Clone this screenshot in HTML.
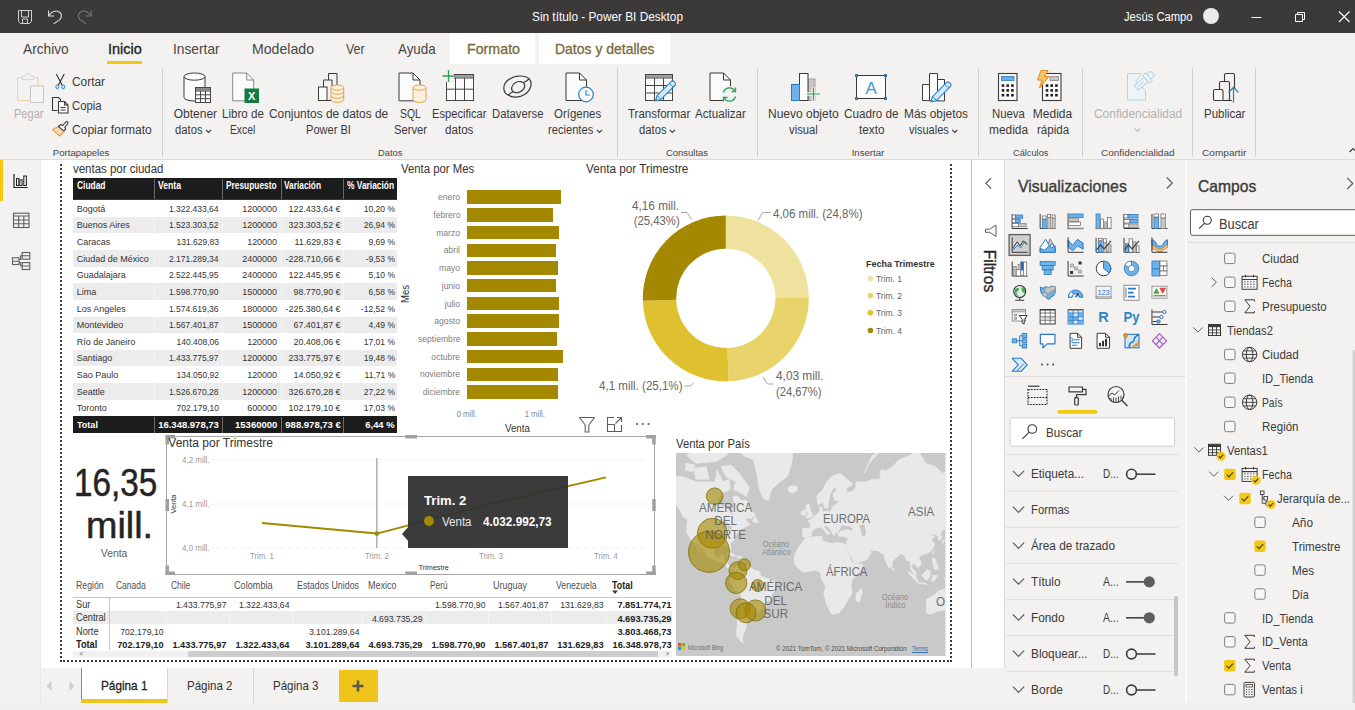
<!DOCTYPE html>
<html lang="es"><head><meta charset="utf-8"><title>Sin título - Power BI Desktop</title><style>
html,body{margin:0;padding:0;}
body{width:1355px;height:710px;overflow:hidden;background:#fff;font-family:"Liberation Sans",sans-serif;}
#app{position:relative;width:1355px;height:710px;overflow:hidden;}
.b{position:absolute;display:block;box-sizing:border-box;}
.t{position:absolute;white-space:nowrap;line-height:1;display:block;}
</style></head><body><div id="app">
<!-- frame -->
<div class="b" style="left:0px;top:0px;width:1355px;height:33px;background:#3b3a39;"></div>
<span class="t" style="top:9.90px;font-size:13px;color:#ffffff;left:532.00px;transform-origin:0 0;transform:scaleX(0.9086);">Sin título - Power BI Desktop</span>
<span class="t" style="top:10.10px;font-size:13px;color:#ffffff;left:1124.40px;transform-origin:0 0;transform:scaleX(0.8631);">Jesús Campo</span>
<div class="b" style="left:1203px;top:8px;width:16px;height:16px;background:#ebebeb;border-radius:50%;"></div>
<svg class="b" style="left:1246px;top:8px;" width="104" height="18" viewBox="0 0 104 18"><path d="M5.5 9.5h10" stroke="#fff" stroke-width="1" fill="none"/><path d="M49.5 6.5h7v7h-7zM51.5 6.5v-2h7v7h-2" stroke="#fff" stroke-width="1" fill="none"/><path d="M93 3.5l10.5 10.5M103.5 3.5L93 14" stroke="#fff" stroke-width="1.1" fill="none"/></svg>
<svg class="b" style="left:0px;top:0px;" width="120" height="33" viewBox="0 0 120 33"><path d="M18.500 10.500h13v11l-2 2h-9l-2-2z" stroke="#d0d0d0" stroke-width="1" fill="none"/><path d="M21.500 10.500v6.500h7v-6.500M22.500 23.500v-4.500h5v4.500" stroke="#d0d0d0" stroke-width="1" fill="none"/><path d="M48.600 10.600v5.400h5.600" stroke="#e0e0e0" stroke-width="1.100" fill="none"/><path d="M49 15.600c2.200-4 6.800-5.800 10.200-3.600 3 2 2.800 5.200.500 7.600l-6 4.300" stroke="#e0e0e0" stroke-width="1.100" fill="none"/><path d="M91.200 10.600v5.400h-5.600" stroke="#7a7876" stroke-width="1.100" fill="none"/><path d="M90.800 15.600c-2.200-4-6.800-5.800-10.200-3.600-3 2-2.800 5.200-.500 7.600l6 4.300" stroke="#7a7876" stroke-width="1.100" fill="none"/></svg>
<div class="b" style="left:0px;top:33px;width:1355px;height:127px;background:#f3f2f1;"></div>
<div class="b" style="left:0px;top:159px;width:1355px;height:1px;background:#dddbd9;"></div>
<div class="b" style="left:450px;top:33px;width:85px;height:30.5px;background:#ffffff;"></div>
<div class="b" style="left:539px;top:33px;width:131px;height:30.5px;background:#ffffff;"></div>
<span class="t" style="top:42.33px;font-size:14.5px;color:#484644;left:23.30px;transform-origin:0 0;transform:scaleX(0.9452);">Archivo</span>
<span class="t" style="top:42.33px;font-size:14.5px;color:#201f1e;-webkit-text-stroke:0.32px #201f1e;left:107.90px;transform-origin:0 0;">Inicio</span>
<div class="b" style="left:107px;top:61px;width:35px;height:2.7px;background:#f2c811;"></div>
<span class="t" style="top:42.33px;font-size:14.5px;color:#484644;left:173.00px;transform-origin:0 0;transform:scaleX(0.9480);">Insertar</span>
<span class="t" style="top:42.33px;font-size:14.5px;color:#484644;left:252.00px;transform-origin:0 0;transform:scaleX(0.9735);">Modelado</span>
<span class="t" style="top:42.33px;font-size:14.5px;color:#484644;left:346.30px;transform-origin:0 0;transform:scaleX(0.8591);">Ver</span>
<span class="t" style="top:42.33px;font-size:14.5px;color:#484644;left:397.70px;transform-origin:0 0;transform:scaleX(0.9228);">Ayuda</span>
<span class="t" style="top:42.33px;font-size:14.5px;color:#7a6c3a;-webkit-text-stroke:0.32px #7a6c3a;left:467.00px;transform-origin:0 0;transform:scaleX(0.9817);">Formato</span>
<span class="t" style="top:42.33px;font-size:14.5px;color:#7a6c3a;-webkit-text-stroke:0.32px #7a6c3a;left:554.60px;transform-origin:0 0;transform:scaleX(0.9635);">Datos y detalles</span>
<div class="b" style="left:162.0px;top:68px;width:1px;height:89px;background:#d2d0ce;"></div>
<div class="b" style="left:616.5px;top:68px;width:1px;height:89px;background:#d2d0ce;"></div>
<div class="b" style="left:757.0px;top:68px;width:1px;height:89px;background:#d2d0ce;"></div>
<div class="b" style="left:977.5px;top:68px;width:1px;height:89px;background:#d2d0ce;"></div>
<div class="b" style="left:1081.5px;top:68px;width:1px;height:89px;background:#d2d0ce;"></div>
<div class="b" style="left:1191.5px;top:68px;width:1px;height:89px;background:#d2d0ce;"></div>
<div class="b" style="left:1255.0px;top:68px;width:1px;height:89px;background:#d2d0ce;"></div>
<div class="b" style="left:0px;top:160px;width:41px;height:543px;background:#f3f2f1;"></div>
<div class="b" style="left:40px;top:160px;width:1px;height:543px;background:#eceae8;"></div>
<div class="b" style="left:0px;top:160px;width:3px;height:40.5px;background:#f2c811;"></div>
<svg class="b" style="left:0px;top:159px;" width="41" height="120" viewBox="0 0 41 120"><path d="M14 15v13.500h13.700" fill="none" stroke="#252423" stroke-width="1.200"/><rect x="16.500" y="19.500" width="2.300" height="7" fill="none" stroke="#252423" stroke-width="1"/><rect x="19.800" y="20.800" width="2.300" height="5.700" fill="none" stroke="#252423" stroke-width="1"/><rect x="23.800" y="17" width="2.600" height="9.500" fill="none" stroke="#252423" stroke-width="1"/><rect x="13.500" y="54.200" width="15.500" height="14.300" fill="none" stroke="#605e5c" stroke-width="1.100"/><path d="M13.500 57h15.500M13.500 61h15.500M13.500 64.800h15.500M18.700 57v11.500M23.800 57v11.500" stroke="#605e5c" stroke-width="1.100"/><g fill="none" stroke="#605e5c" stroke-width="1.100"><rect x="12.500" y="98.800" width="6.500" height="6.700"/><rect x="22.200" y="93.500" width="7.600" height="6.700"/><rect x="22.200" y="103.600" width="7.600" height="6.900"/><path d="M12.500 102.200h6.500M22.200 96.800h7.600M22.200 107h7.600M19 100.500h1.600v-3.700h1.600M19 103.500h1.600v3.500h1.600"/></g></svg>
<div class="b" style="left:41px;top:160px;width:931px;height:508px;background:#ffffff;"></div>
<div class="b" style="left:972.5px;top:160px;width:32px;height:508px;background:#ffffff;"></div>
<div class="b" style="left:1004.5px;top:160px;width:181px;height:543px;background:#f3f2f1;"></div>
<div class="b" style="left:1004px;top:160px;width:1px;height:543px;background:#dddbd9;"></div>
<div class="b" style="left:1185px;top:160px;width:2px;height:543px;background:#faf9f8;"></div>
<div class="b" style="left:1187px;top:160px;width:168px;height:543px;background:#f3f2f1;"></div>
<div class="b" style="left:41px;top:668px;width:963.5px;height:35px;background:#f3f2f1;"></div>
<div class="b" style="left:81px;top:668px;width:86px;height:35px;background:#ffffff;"></div>
<div class="b" style="left:80.5px;top:668px;width:1px;height:35px;background:#8a8886;"></div>
<div class="b" style="left:81px;top:699px;width:86px;height:3.8px;background:#efc51c;"></div>
<div class="b" style="left:167px;top:668px;width:86px;height:35px;background:#f3f2f1;"></div>
<div class="b" style="left:253px;top:668px;width:85.5px;height:35px;background:#f3f2f1;"></div>
<div class="b" style="left:166.5px;top:668px;width:1px;height:35px;background:#d8d6d4;"></div>
<div class="b" style="left:252.5px;top:668px;width:1px;height:35px;background:#d8d6d4;"></div>
<div class="b" style="left:338.5px;top:670.2px;width:39.2px;height:32px;background:#efc51c;"></div>
<span class="t" style="top:678.60px;font-size:13px;color:#201f1e;-webkit-text-stroke:0.29px #201f1e;left:101.00px;transform-origin:0 0;transform:scaleX(0.9060);">Página 1</span>
<span class="t" style="top:678.60px;font-size:13px;color:#323130;left:186.50px;transform-origin:0 0;transform:scaleX(0.8865);">Página 2</span>
<span class="t" style="top:678.60px;font-size:13px;color:#323130;left:272.50px;transform-origin:0 0;transform:scaleX(0.8865);">Página 3</span>
<svg class="b" style="left:350px;top:678px;" width="16" height="16" viewBox="0 0 16 16"><path d="M8 2.500v11M2.500 8h11" stroke="#5c574a" stroke-width="2.6" fill="none"/></svg>
<svg class="b" style="left:44px;top:680px;" width="32" height="12" viewBox="0 0 32 12"><path d="M7.500 1v10l-5-5z" fill="#d2d0ce"/><path d="M25.500 1v10l5-5z" fill="#d2d0ce"/></svg>
<div class="b" style="left:0px;top:703px;width:1355px;height:7px;background:#f0efee;"></div>
<!-- ribbon -->
<svg class="b" style="left:0px;top:0px;" width="1355" height="159" viewBox="0 0 1355 159"><path d="M23.500 77.500h-6v23h13M32.500 77.500h5.500v8" fill="none" stroke="#efd2ad" stroke-width="1"/><path d="M22.500 79.500v-3.500h3c0-3.500 5-3.500 5 0h3v3.500z" fill="#f3f2f1" stroke="#d9d7d5" stroke-width="1"/><rect x="30.500" y="86" width="13" height="16.500" fill="#f6f5f4" stroke="#c8c6c4" stroke-width="1"/><path d="M56.300 74l6 11.500M64.200 74l-6 11.500" stroke="#3b3a39" stroke-width="1.200" fill="none"/><ellipse cx="57.300" cy="86.800" rx="1.500" ry="2" fill="#cfe4f5" stroke="#2e86c9" stroke-width="1"/><ellipse cx="63.200" cy="86.800" rx="1.500" ry="2" fill="#cfe4f5" stroke="#2e86c9" stroke-width="1"/><path d="M57.500 110.500h-5v-13h6l2 2v1.500" fill="none" stroke="#3b3a39" stroke-width="1.100"/><path d="M58.500 101.500h6l3.500 3.500v8h-9.500zM64.500 101.500v3.500h3.500" fill="#fbfbfb" stroke="#3b3a39" stroke-width="1.100"/><path d="M60.500 107.500h5M60.500 110h5" stroke="#3b3a39" stroke-width="1"/><path d="M52.500 129.500l7-3.500 5 5.500-5 4.500c-2-2-4.500-4-7-6.500z" fill="#f7d9ae" stroke="#e3a04a" stroke-width="1.100" stroke-linejoin="round"/><path d="M58.500 126.500l2.500-2 1.800 1 3-3.500c1-1 2.800 0.300 2 1.500l-3 3.800 0.800 1.700-2 1.800z" fill="#fbfbfb" stroke="#3b3a39" stroke-width="1.100" stroke-linejoin="round"/><path d="M184 76.6v20.8a10.5 3.6 0 0 0 21 0v-20.8" fill="#fbfbfb" stroke="#3b3a39" stroke-width="1"/><ellipse cx="194.5" cy="76.6" rx="10.5" ry="3.6" fill="#fbfbfb" stroke="#3b3a39" stroke-width="1"/><rect x="195.5" y="87.5" width="15" height="15" fill="#fbfbfb" stroke="#484644" stroke-width="1"/><rect x="196.0" y="88.0" width="14" height="2.5" fill="#8a8886"/><path d="M200.5 91.0V102.5" stroke="#484644" stroke-width="1"/><path d="M205.5 91.0V102.5" stroke="#484644" stroke-width="1"/><path d="M195.5 91.0H210.5" stroke="#484644" stroke-width="1"/><path d="M195.5 94.8H210.5" stroke="#484644" stroke-width="1"/><path d="M195.5 98.7H210.5" stroke="#484644" stroke-width="1"/><path d="M232.7 73h14l7 7v20.8h-21z" fill="#fbfbfb" stroke="#8a8886" stroke-width="1"/><path d="M246.7 73v7h7" fill="none" stroke="#8a8886" stroke-width="1"/><rect x="244.500" y="88.500" width="14.500" height="14.500" fill="#107c41"/><text x="251.750" y="100" font-family="Liberation Sans, sans-serif" font-weight="700" font-size="11" fill="#fff" text-anchor="middle">X</text><path d="M328.500 80v-6.500h8.500v12" fill="none" stroke="#3b3a39" stroke-width="1"/><path d="M323.500 87v-7h8.500v6" fill="none" stroke="#3b3a39" stroke-width="1"/><rect x="318.500" y="87" width="8.500" height="13.500" fill="#fbfbfb" stroke="#3b3a39" stroke-width="1"/><path d="M327 100.500h4" stroke="#3b3a39" stroke-width="1"/><path d="M331 87.6v12.2a6.35 2.6 0 0 0 12.7 0v-12.2" fill="#fdf1de" stroke="#e3a04a" stroke-width="1"/><ellipse cx="337.35" cy="87.6" rx="6.35" ry="2.6" fill="#fdf1de" stroke="#e3a04a" stroke-width="1"/><path d="M331 91.66666666666666a6.35 2.6 0 0 0 12.7 0" fill="none" stroke="#e3a04a" stroke-width="1"/><path d="M331 95.73333333333332a6.35 2.6 0 0 0 12.7 0" fill="none" stroke="#e3a04a" stroke-width="1"/><path d="M399 73h14l7 7v20.8h-21z" fill="#fbfbfb" stroke="#3b3a39" stroke-width="1"/><path d="M413 73v7h7" fill="none" stroke="#3b3a39" stroke-width="1"/><path d="M413 87.6v12.2a6.5 2.6 0 0 0 13 0v-12.2" fill="#fdf1de" stroke="#e3a04a" stroke-width="1"/><ellipse cx="419.5" cy="87.6" rx="6.5" ry="2.6" fill="#fdf1de" stroke="#e3a04a" stroke-width="1"/><rect x="446.5" y="74.5" width="27" height="26" fill="#fbfbfb" stroke="#484644" stroke-width="1"/><rect x="447.0" y="75.0" width="26" height="2.5" fill="#a19f9d"/><path d="M455.5 78.0V100.5" stroke="#484644" stroke-width="1"/><path d="M464.5 78.0V100.5" stroke="#484644" stroke-width="1"/><path d="M446.5 78.0H473.5" stroke="#484644" stroke-width="1"/><path d="M446.5 89.2H473.5" stroke="#484644" stroke-width="1"/><rect x="441" y="69" width="13" height="13" fill="#f3f2f1"/><path d="M448.500 70v12M442.500 76h12" stroke="#2f9e57" stroke-width="1.300"/><g fill="none" stroke="#3b3a39" stroke-width="1.200"><path d="M508.500 95.200c-6-2.500-6.500-11 0-15.500 6.500-4.500 16.500-5 20.500-1 4.200 4.200 1.500 12-4 15.500-5.500 3.500-12.500 3.800-16.500 1z"/><path d="M513.300 91.800c-2.800-2-2-6.800 2-9 3.800-2.200 8.200-1.500 9.200 1.500 1 3-1.500 6.500-5 7.800-2.300.800-4.600.800-6.200-.300z"/><path d="M508.500 95.200c1-1.500 2.800-2.800 4.800-3.400M529 78.700c-1 1.500-3 3-5 3.800"/></g><path d="M566 73h13.5l7 7v20.5h-20.5z" fill="#fbfbfb" stroke="#3b3a39" stroke-width="1"/><path d="M579.5 73v7h7" fill="none" stroke="#3b3a39" stroke-width="1"/><circle cx="586" cy="94.500" r="7.300" fill="#fbfbfb" stroke="#2e86c9" stroke-width="1.200"/><path d="M586 90v5h4" fill="none" stroke="#2e86c9" stroke-width="1.200"/><rect x="645.5" y="74.5" width="27" height="26" fill="#fbfbfb" stroke="#484644" stroke-width="1"/><rect x="646.0" y="75.0" width="26" height="2.5" fill="#a19f9d"/><path d="M654.5 78.0V100.5" stroke="#484644" stroke-width="1"/><path d="M663.5 78.0V100.5" stroke="#484644" stroke-width="1"/><path d="M645.5 78.0H672.5" stroke="#484644" stroke-width="1"/><path d="M645.5 85.5H672.5" stroke="#484644" stroke-width="1"/><path d="M645.5 93.0H672.5" stroke="#484644" stroke-width="1"/><path d="M655.50 101.00L660.98 99.41L675.38 85.01L675.38 82.88L673.62 81.12L671.49 81.12L657.09 95.52z" fill="#d6e9f8" stroke="#2e86c9" stroke-width="1.1" stroke-linejoin="round"/><path d="M660.98 99.41L657.09 95.52" stroke="#2e86c9" stroke-width="1"/><path d="M673.26 87.13L669.37 83.24" stroke="#2e86c9" stroke-width="1"/><path d="M655.50 101.00L657.76 100.15L656.35 98.74z" fill="#2e86c9"/><path d="M710 73h13.5l7 7v20.5h-20.5z" fill="#fbfbfb" stroke="#3b3a39" stroke-width="1"/><path d="M723.5 73v7h7" fill="none" stroke="#3b3a39" stroke-width="1"/><circle cx="729.500" cy="94.500" r="8.500" fill="#f3f2f1"/><path d="M723.500 92.500a6.300 6.300 0 0 1 11.500-1.500M735.500 96.500a6.300 6.300 0 0 1-11.500 1.500" fill="none" stroke="#2f9e57" stroke-width="1.300"/><path d="M735.500 87.500v4h-4M723.500 101.500v-4h4" fill="none" stroke="#2f9e57" stroke-width="1.300"/><rect x="808" y="79" width="7" height="21.500" fill="#c8c6c4" stroke="#a19f9d" stroke-width="1"/><rect x="799.500" y="73.500" width="8.500" height="27" fill="#fbfbfb" stroke="#3b3a39" stroke-width="1"/><rect x="791.500" y="84.500" width="8" height="16" fill="#6db3ea" stroke="#2b78c2" stroke-width="1"/><path d="M813.500 87v14M806.500 94h14" stroke="#f3f2f1" stroke-width="3.500"/><path d="M813.500 87.500v13M807 94h13" stroke="#2f9e57" stroke-width="1.200"/><rect x="856.500" y="75.500" width="29" height="23" fill="#fbfbfb" stroke="#3b3a39" stroke-width="1"/><rect x="855.0" y="74.0" width="3" height="3" fill="#3a78a8"/><rect x="884.0" y="74.0" width="3" height="3" fill="#3a78a8"/><rect x="855.0" y="97.0" width="3" height="3" fill="#3a78a8"/><rect x="884.0" y="97.0" width="3" height="3" fill="#3a78a8"/><text x="871.250" y="93.500" font-family="Liberation Sans, sans-serif" font-size="17" fill="#3f97d6" text-anchor="middle">A</text><path d="M922.500 100.500v-16h7v-11h8v6h7v21.500z" fill="#fbfbfb" stroke="#3b3a39" stroke-width="1"/><path d="M929.500 84.500v16M937.500 79.500v21" stroke="#3b3a39" stroke-width="1"/><path d="M931.00 102.00L936.48 100.41L950.88 86.01L950.88 83.88L949.12 82.12L946.99 82.12L932.59 96.52z" fill="#d6e9f8" stroke="#2e86c9" stroke-width="1.1" stroke-linejoin="round"/><path d="M936.48 100.41L932.59 96.52" stroke="#2e86c9" stroke-width="1"/><path d="M948.76 88.13L944.87 84.24" stroke="#2e86c9" stroke-width="1"/><path d="M931.00 102.00L933.26 101.15L931.85 99.74z" fill="#2e86c9"/><rect x="998.5" y="73.500" width="18.500" height="27" fill="#fbfbfb" stroke="#3b3a39" stroke-width="1.100"/><rect x="1001.7" y="84.3" width="2.600" height="2.600" fill="#201f1e"/><rect x="1006.4" y="84.3" width="2.600" height="2.600" fill="#201f1e"/><rect x="1011.1" y="84.3" width="2.600" height="2.600" fill="#201f1e"/><rect x="1001.7" y="89.1" width="2.600" height="2.600" fill="#201f1e"/><rect x="1006.4" y="89.1" width="2.600" height="2.600" fill="#201f1e"/><rect x="1011.1" y="89.1" width="2.600" height="2.600" fill="#201f1e"/><rect x="1001.7" y="93.9" width="2.600" height="2.600" fill="#201f1e"/><rect x="1006.4" y="93.9" width="2.600" height="2.600" fill="#201f1e"/><rect x="1011.1" y="93.9" width="2.600" height="2.600" fill="#201f1e"/><rect x="1001.500" y="76.500" width="12.500" height="4" fill="#69afe5" stroke="#2b78c2" stroke-width="0.800"/><rect x="1042.5" y="73.500" width="18.500" height="27" fill="#fbfbfb" stroke="#3b3a39" stroke-width="1.100"/><rect x="1045.7" y="84.3" width="2.600" height="2.600" fill="#201f1e"/><rect x="1050.4" y="84.3" width="2.600" height="2.600" fill="#201f1e"/><rect x="1055.1" y="84.3" width="2.600" height="2.600" fill="#201f1e"/><rect x="1045.7" y="89.1" width="2.600" height="2.600" fill="#201f1e"/><rect x="1050.4" y="89.1" width="2.600" height="2.600" fill="#201f1e"/><rect x="1055.1" y="89.1" width="2.600" height="2.600" fill="#201f1e"/><rect x="1045.7" y="93.9" width="2.600" height="2.600" fill="#201f1e"/><rect x="1050.4" y="93.9" width="2.600" height="2.600" fill="#201f1e"/><rect x="1055.1" y="93.9" width="2.600" height="2.600" fill="#201f1e"/><rect x="1050" y="76.500" width="8.500" height="4" fill="#c8c6c4" stroke="#8a8886" stroke-width="0.800"/><path d="M1041 70.500h7l-3.500 6h4.500l-9.500 11.500 2.500-8h-4.500z" fill="#fbc36a" stroke="#e08a1e" stroke-width="1" stroke-linejoin="round"/><path d="M1127.500 73.500h14l-6 8 10 9v9.500h-18z" fill="#f0f4f7" stroke="#b6d3e6" stroke-width="1"/><g transform="translate(1143,82) rotate(-42)"><rect x="-9" y="-3" width="13" height="6" fill="#f0f4f7" stroke="#b6d3e6" stroke-width="1"/><rect x="4" y="-5" width="4" height="10" fill="#f0f4f7" stroke="#b6d3e6" stroke-width="1"/><rect x="8" y="-3" width="5" height="6" rx="1.500" fill="#f0f4f7" stroke="#b6d3e6" stroke-width="1"/><path d="M-7 0h8" stroke="#b6d3e6" stroke-width="1"/></g><path d="M1224.500 81v-6c0-1 .800-1.500 1.500-1.500h7c1 0 1.500.800 1.500 1.500v14" fill="none" stroke="#3b3a39" stroke-width="1.100"/><path d="M1219.500 89.500v-6.500c0-1 .800-1.500 1.500-1.500h7c1 0 1.500.800 1.500 1.500v17.500" fill="none" stroke="#3b3a39" stroke-width="1.100"/><rect x="1213.500" y="89.500" width="9.500" height="11" rx="1.500" fill="#fbfbfb" stroke="#3b3a39" stroke-width="1.100"/><path d="M1223 100.500h9.500" stroke="#3b3a39" stroke-width="1.100"/><path d="M1233.500 102v-14" stroke="#f3f2f1" stroke-width="3.500"/><path d="M1233.500 102.500v-15M1228.500 92.500l5-5.200 5 5.200" fill="none" stroke="#2f7d95" stroke-width="1.200"/><path d="M205.9 129.89999999999998l2.600 2.600 2.600-2.600" stroke="#3b3a39" stroke-width="1.100" fill="none"/><path d="M596.9 129.89999999999998l2.600 2.600 2.600-2.600" stroke="#3b3a39" stroke-width="1.100" fill="none"/><path d="M669.6999999999999 129.89999999999998l2.600 2.600 2.600-2.600" stroke="#3b3a39" stroke-width="1.100" fill="none"/><path d="M952.1999999999999 129.89999999999998l2.600 2.600 2.600-2.600" stroke="#3b3a39" stroke-width="1.100" fill="none"/><path d="M1134.9 128.7l2.600 2.600 2.600-2.600" stroke="#b3b0ad" stroke-width="1.100" fill="none"/><path d="M1349.500 152l3.500-3.500 3.500 3.500" stroke="#3b3a39" stroke-width="1.200" fill="none"/></svg>
<span class="t" style="top:108.04px;font-size:12px;color:#b3b0ad;left:13.50px;transform-origin:0 0;transform:scaleX(0.9212);">Pegar</span>
<span class="t" style="top:75.74px;font-size:12px;color:#3b3a39;left:72.40px;transform-origin:0 0;transform:scaleX(0.9898);">Cortar</span>
<span class="t" style="top:100.04px;font-size:12px;color:#3b3a39;left:72.40px;transform-origin:0 0;transform:scaleX(0.9440);">Copia</span>
<span class="t" style="top:123.84px;font-size:12px;color:#3b3a39;left:72.40px;transform-origin:0 0;transform:scaleX(1.0042);">Copiar formato</span>
<span class="t" style="top:147.57px;font-size:9.6px;color:#484644;left:52.80px;transform-origin:0 0;">Portapapeles</span>
<span class="t" style="top:108.04px;font-size:12px;color:#3b3a39;left:173.70px;transform-origin:0 0;">Obtener</span>
<span class="t" style="top:123.84px;font-size:12px;color:#3b3a39;left:175.00px;transform-origin:0 0;transform:scaleX(0.9368);">datos</span>
<span class="t" style="top:108.04px;font-size:12px;color:#3b3a39;left:221.60px;transform-origin:0 0;transform:scaleX(0.9662);">Libro de</span>
<span class="t" style="top:123.84px;font-size:12px;color:#3b3a39;left:230.00px;transform-origin:0 0;transform:scaleX(0.8588);">Excel</span>
<span class="t" style="top:108.04px;font-size:12px;color:#3b3a39;left:268.50px;transform-origin:0 0;transform:scaleX(0.9926);">Conjuntos de datos de</span>
<span class="t" style="top:123.84px;font-size:12px;color:#3b3a39;left:305.60px;transform-origin:0 0;transform:scaleX(0.9222);">Power BI</span>
<span class="t" style="top:108.04px;font-size:12px;color:#3b3a39;left:399.50px;transform-origin:0 0;transform:scaleX(0.8662);">SQL</span>
<span class="t" style="top:123.84px;font-size:12px;color:#3b3a39;left:393.50px;transform-origin:0 0;transform:scaleX(0.9365);">Server</span>
<span class="t" style="top:108.04px;font-size:12px;color:#3b3a39;left:432.30px;transform-origin:0 0;transform:scaleX(0.9286);">Especificar</span>
<span class="t" style="top:123.84px;font-size:12px;color:#3b3a39;left:445.40px;transform-origin:0 0;transform:scaleX(0.9674);">datos</span>
<span class="t" style="top:108.04px;font-size:12px;color:#3b3a39;left:553.80px;transform-origin:0 0;transform:scaleX(0.9562);">Orígenes</span>
<span class="t" style="top:123.84px;font-size:12px;color:#3b3a39;left:548.30px;transform-origin:0 0;transform:scaleX(0.9283);">recientes</span>
<span class="t" style="top:108.04px;font-size:12px;color:#3b3a39;left:628.00px;transform-origin:0 0;transform:scaleX(0.9599);">Transformar</span>
<span class="t" style="top:123.84px;font-size:12px;color:#3b3a39;left:639.00px;transform-origin:0 0;transform:scaleX(0.9368);">datos</span>
<span class="t" style="top:108.04px;font-size:12px;color:#3b3a39;left:768.00px;transform-origin:0 0;">Nuevo objeto</span>
<span class="t" style="top:123.84px;font-size:12px;color:#3b3a39;left:789.00px;transform-origin:0 0;transform:scaleX(0.9387);">visual</span>
<span class="t" style="top:108.04px;font-size:12px;color:#3b3a39;left:844.00px;transform-origin:0 0;transform:scaleX(0.9743);">Cuadro de</span>
<span class="t" style="top:123.84px;font-size:12px;color:#3b3a39;left:858.50px;transform-origin:0 0;transform:scaleX(0.9802);">texto</span>
<span class="t" style="top:108.04px;font-size:12px;color:#3b3a39;left:903.60px;transform-origin:0 0;transform:scaleX(0.9892);">Más objetos</span>
<span class="t" style="top:123.84px;font-size:12px;color:#3b3a39;left:909.00px;transform-origin:0 0;transform:scaleX(0.9180);">visuales</span>
<span class="t" style="top:108.04px;font-size:12px;color:#3b3a39;left:992.00px;transform-origin:0 0;transform:scaleX(0.9456);">Nueva</span>
<span class="t" style="top:123.84px;font-size:12px;color:#3b3a39;left:989.00px;transform-origin:0 0;transform:scaleX(0.9909);">medida</span>
<span class="t" style="top:108.04px;font-size:12px;color:#3b3a39;left:1032.80px;transform-origin:0 0;">Medida</span>
<span class="t" style="top:123.84px;font-size:12px;color:#3b3a39;left:1036.50px;transform-origin:0 0;transform:scaleX(0.9623);">rápida</span>
<span class="t" style="top:108.04px;font-size:12px;color:#3b3a39;left:491.80px;transform-origin:0 0;transform:scaleX(0.9416);">Dataverse</span>
<span class="t" style="top:108.04px;font-size:12px;color:#3b3a39;left:695.40px;transform-origin:0 0;transform:scaleX(0.9660);">Actualizar</span>
<span class="t" style="top:108.04px;font-size:12px;color:#b3b0ad;left:1093.80px;transform-origin:0 0;transform:scaleX(0.9940);">Confidencialidad</span>
<span class="t" style="top:108.04px;font-size:12px;color:#3b3a39;left:1204.00px;transform-origin:0 0;transform:scaleX(0.9549);">Publicar</span>
<span class="t" style="top:147.57px;font-size:9.6px;color:#484644;left:377.60px;transform-origin:0 0;transform:scaleX(0.9729);">Datos</span>
<span class="t" style="top:147.57px;font-size:9.6px;color:#484644;left:666.00px;transform-origin:0 0;transform:scaleX(0.9838);">Consultas</span>
<span class="t" style="top:147.57px;font-size:9.6px;color:#484644;left:851.70px;transform-origin:0 0;">Insertar</span>
<span class="t" style="top:147.57px;font-size:9.6px;color:#484644;left:1012.60px;transform-origin:0 0;transform:scaleX(0.9615);">Cálculos</span>
<span class="t" style="top:147.57px;font-size:9.6px;color:#484644;left:1100.80px;transform-origin:0 0;transform:scaleX(1.0354);">Confidencialidad</span>
<span class="t" style="top:147.57px;font-size:9.6px;color:#484644;left:1202.00px;transform-origin:0 0;transform:scaleX(1.0512);">Compartir</span>
<!-- canvas -->
<div class="b" style="left:41px;top:160px;width:930.500px;height:508px;overflow:hidden;background:#fff;"><div class="b" style="left:-41px;top:-160px;width:1355px;height:710px;">
<div class="b" style="left:60px;top:164px;width:892px;height:498px;border:2px dotted #3a3a3a;border-top:none;"></div>
<span class="t" style="top:162.74px;font-size:12px;color:#333;left:73.00px;transform-origin:0 0;transform:scaleX(0.9553);">ventas por ciudad</span>
<div class="b" style="left:73px;top:178px;width:323.8px;height:21.5px;background:#1c1c1c;"></div>
<div class="b" style="left:73px;top:199px;width:323.8px;height:0.5px;background:#2a3a55;"></div>
<div class="b" style="left:154.1px;top:178.5px;width:1px;height:20.2px;background:#6a6a6a;"></div>
<div class="b" style="left:221.5px;top:178.5px;width:1px;height:20.2px;background:#6a6a6a;"></div>
<div class="b" style="left:280.5px;top:178.5px;width:1px;height:20.2px;background:#6a6a6a;"></div>
<div class="b" style="left:343.3px;top:178.5px;width:1px;height:20.2px;background:#6a6a6a;"></div>
<span class="t" style="top:181.33px;font-size:10px;color:#ffffff;font-weight:700;left:76.70px;transform-origin:0 0;transform:scaleX(0.8410);">Ciudad</span>
<span class="t" style="top:181.33px;font-size:10px;color:#ffffff;font-weight:700;left:157.80px;transform-origin:0 0;transform:scaleX(0.8583);">Venta</span>
<span class="t" style="top:181.33px;font-size:10px;color:#ffffff;font-weight:700;left:225.70px;transform-origin:0 0;transform:scaleX(0.8353);">Presupuesto</span>
<span class="t" style="top:181.33px;font-size:10px;color:#ffffff;font-weight:700;left:284.30px;transform-origin:0 0;transform:scaleX(0.8320);">Variación</span>
<span class="t" style="top:181.33px;font-size:10px;color:#ffffff;font-weight:700;left:347.40px;transform-origin:0 0;transform:scaleX(0.8372);">% Variación</span>
<span class="t" style="top:204.78px;font-size:9px;color:#333333;left:76.70px;transform-origin:0 0;">Bogotá</span>
<span class="t" style="top:204.78px;font-size:9px;color:#333333;right:1136.40px;transform-origin:100% 0;transform:scaleX(0.9450);">1.322.433,64</span>
<span class="t" style="top:204.78px;font-size:9px;color:#333333;right:1077.70px;transform-origin:100% 0;transform:scaleX(0.9950);">1200000</span>
<span class="t" style="top:204.78px;font-size:9px;color:#333333;right:1014.20px;transform-origin:100% 0;transform:scaleX(0.9900);">122.433,64 €</span>
<span class="t" style="top:204.78px;font-size:9px;color:#333333;right:960.00px;transform-origin:100% 0;transform:scaleX(0.9500);">10,20 %</span>
<div class="b" style="left:73px;top:216.8px;width:323.8px;height:16.6px;background:#ececec;"></div>
<div class="b" style="left:154.1px;top:216.8px;width:1px;height:16.6px;background:#f6f6f6;"></div>
<div class="b" style="left:221.5px;top:216.8px;width:1px;height:16.6px;background:#f6f6f6;"></div>
<div class="b" style="left:280.5px;top:216.8px;width:1px;height:16.6px;background:#f6f6f6;"></div>
<div class="b" style="left:343.3px;top:216.8px;width:1px;height:16.6px;background:#f6f6f6;"></div>
<span class="t" style="top:221.41px;font-size:9px;color:#333333;left:76.70px;transform-origin:0 0;">Buenos Aires</span>
<span class="t" style="top:221.41px;font-size:9px;color:#333333;right:1136.40px;transform-origin:100% 0;transform:scaleX(0.9450);">1.523.303,52</span>
<span class="t" style="top:221.41px;font-size:9px;color:#333333;right:1077.70px;transform-origin:100% 0;transform:scaleX(0.9950);">1200000</span>
<span class="t" style="top:221.41px;font-size:9px;color:#333333;right:1014.20px;transform-origin:100% 0;transform:scaleX(0.9900);">323.303,52 €</span>
<span class="t" style="top:221.41px;font-size:9px;color:#333333;right:960.00px;transform-origin:100% 0;transform:scaleX(0.9500);">26,94 %</span>
<span class="t" style="top:238.04px;font-size:9px;color:#333333;left:76.70px;transform-origin:0 0;">Caracas</span>
<span class="t" style="top:238.04px;font-size:9px;color:#333333;right:1136.40px;transform-origin:100% 0;transform:scaleX(0.9450);">131.629,83</span>
<span class="t" style="top:238.04px;font-size:9px;color:#333333;right:1077.70px;transform-origin:100% 0;transform:scaleX(0.9950);">120000</span>
<span class="t" style="top:238.04px;font-size:9px;color:#333333;right:1014.20px;transform-origin:100% 0;transform:scaleX(0.9900);">11.629,83 €</span>
<span class="t" style="top:238.04px;font-size:9px;color:#333333;right:960.00px;transform-origin:100% 0;transform:scaleX(0.9500);">9,69 %</span>
<div class="b" style="left:73px;top:250.1px;width:323.8px;height:16.6px;background:#ececec;"></div>
<div class="b" style="left:154.1px;top:250.1px;width:1px;height:16.6px;background:#f6f6f6;"></div>
<div class="b" style="left:221.5px;top:250.1px;width:1px;height:16.6px;background:#f6f6f6;"></div>
<div class="b" style="left:280.5px;top:250.1px;width:1px;height:16.6px;background:#f6f6f6;"></div>
<div class="b" style="left:343.3px;top:250.1px;width:1px;height:16.6px;background:#f6f6f6;"></div>
<span class="t" style="top:254.67px;font-size:9px;color:#333333;left:76.70px;transform-origin:0 0;">Ciudad de México</span>
<span class="t" style="top:254.67px;font-size:9px;color:#333333;right:1136.40px;transform-origin:100% 0;transform:scaleX(0.9450);">2.171.289,34</span>
<span class="t" style="top:254.67px;font-size:9px;color:#333333;right:1077.70px;transform-origin:100% 0;transform:scaleX(0.9950);">2400000</span>
<span class="t" style="top:254.67px;font-size:9px;color:#333333;right:1014.20px;transform-origin:100% 0;transform:scaleX(0.9900);">-228.710,66 €</span>
<span class="t" style="top:254.67px;font-size:9px;color:#333333;right:960.00px;transform-origin:100% 0;transform:scaleX(0.9500);">-9,53 %</span>
<span class="t" style="top:271.30px;font-size:9px;color:#333333;left:76.70px;transform-origin:0 0;">Guadalajara</span>
<span class="t" style="top:271.30px;font-size:9px;color:#333333;right:1136.40px;transform-origin:100% 0;transform:scaleX(0.9450);">2.522.445,95</span>
<span class="t" style="top:271.30px;font-size:9px;color:#333333;right:1077.70px;transform-origin:100% 0;transform:scaleX(0.9950);">2400000</span>
<span class="t" style="top:271.30px;font-size:9px;color:#333333;right:1014.20px;transform-origin:100% 0;transform:scaleX(0.9900);">122.445,95 €</span>
<span class="t" style="top:271.30px;font-size:9px;color:#333333;right:960.00px;transform-origin:100% 0;transform:scaleX(0.9500);">5,10 %</span>
<div class="b" style="left:73px;top:283.3px;width:323.8px;height:16.6px;background:#ececec;"></div>
<div class="b" style="left:154.1px;top:283.3px;width:1px;height:16.6px;background:#f6f6f6;"></div>
<div class="b" style="left:221.5px;top:283.3px;width:1px;height:16.6px;background:#f6f6f6;"></div>
<div class="b" style="left:280.5px;top:283.3px;width:1px;height:16.6px;background:#f6f6f6;"></div>
<div class="b" style="left:343.3px;top:283.3px;width:1px;height:16.6px;background:#f6f6f6;"></div>
<span class="t" style="top:287.93px;font-size:9px;color:#333333;left:76.70px;transform-origin:0 0;">Lima</span>
<span class="t" style="top:287.93px;font-size:9px;color:#333333;right:1136.40px;transform-origin:100% 0;transform:scaleX(0.9450);">1.598.770,90</span>
<span class="t" style="top:287.93px;font-size:9px;color:#333333;right:1077.70px;transform-origin:100% 0;transform:scaleX(0.9950);">1500000</span>
<span class="t" style="top:287.93px;font-size:9px;color:#333333;right:1014.20px;transform-origin:100% 0;transform:scaleX(0.9900);">98.770,90 €</span>
<span class="t" style="top:287.93px;font-size:9px;color:#333333;right:960.00px;transform-origin:100% 0;transform:scaleX(0.9500);">6,58 %</span>
<span class="t" style="top:304.56px;font-size:9px;color:#333333;left:76.70px;transform-origin:0 0;">Los Angeles</span>
<span class="t" style="top:304.56px;font-size:9px;color:#333333;right:1136.40px;transform-origin:100% 0;transform:scaleX(0.9450);">1.574.619,36</span>
<span class="t" style="top:304.56px;font-size:9px;color:#333333;right:1077.70px;transform-origin:100% 0;transform:scaleX(0.9950);">1800000</span>
<span class="t" style="top:304.56px;font-size:9px;color:#333333;right:1014.20px;transform-origin:100% 0;transform:scaleX(0.9900);">-225.380,64 €</span>
<span class="t" style="top:304.56px;font-size:9px;color:#333333;right:960.00px;transform-origin:100% 0;transform:scaleX(0.9500);">-12,52 %</span>
<div class="b" style="left:73px;top:316.6px;width:323.8px;height:16.6px;background:#ececec;"></div>
<div class="b" style="left:154.1px;top:316.6px;width:1px;height:16.6px;background:#f6f6f6;"></div>
<div class="b" style="left:221.5px;top:316.6px;width:1px;height:16.6px;background:#f6f6f6;"></div>
<div class="b" style="left:280.5px;top:316.6px;width:1px;height:16.6px;background:#f6f6f6;"></div>
<div class="b" style="left:343.3px;top:316.6px;width:1px;height:16.6px;background:#f6f6f6;"></div>
<span class="t" style="top:321.19px;font-size:9px;color:#333333;left:76.70px;transform-origin:0 0;">Montevideo</span>
<span class="t" style="top:321.19px;font-size:9px;color:#333333;right:1136.40px;transform-origin:100% 0;transform:scaleX(0.9450);">1.567.401,87</span>
<span class="t" style="top:321.19px;font-size:9px;color:#333333;right:1077.70px;transform-origin:100% 0;transform:scaleX(0.9950);">1500000</span>
<span class="t" style="top:321.19px;font-size:9px;color:#333333;right:1014.20px;transform-origin:100% 0;transform:scaleX(0.9900);">67.401,87 €</span>
<span class="t" style="top:321.19px;font-size:9px;color:#333333;right:960.00px;transform-origin:100% 0;transform:scaleX(0.9500);">4,49 %</span>
<span class="t" style="top:337.82px;font-size:9px;color:#333333;left:76.70px;transform-origin:0 0;">Río de Janeiro</span>
<span class="t" style="top:337.82px;font-size:9px;color:#333333;right:1136.40px;transform-origin:100% 0;transform:scaleX(0.9450);">140.408,06</span>
<span class="t" style="top:337.82px;font-size:9px;color:#333333;right:1077.70px;transform-origin:100% 0;transform:scaleX(0.9950);">120000</span>
<span class="t" style="top:337.82px;font-size:9px;color:#333333;right:1014.20px;transform-origin:100% 0;transform:scaleX(0.9900);">20.408,06 €</span>
<span class="t" style="top:337.82px;font-size:9px;color:#333333;right:960.00px;transform-origin:100% 0;transform:scaleX(0.9500);">17,01 %</span>
<div class="b" style="left:73px;top:349.9px;width:323.8px;height:16.6px;background:#ececec;"></div>
<div class="b" style="left:154.1px;top:349.9px;width:1px;height:16.6px;background:#f6f6f6;"></div>
<div class="b" style="left:221.5px;top:349.9px;width:1px;height:16.6px;background:#f6f6f6;"></div>
<div class="b" style="left:280.5px;top:349.9px;width:1px;height:16.6px;background:#f6f6f6;"></div>
<div class="b" style="left:343.3px;top:349.9px;width:1px;height:16.6px;background:#f6f6f6;"></div>
<span class="t" style="top:354.45px;font-size:9px;color:#333333;left:76.70px;transform-origin:0 0;">Santiago</span>
<span class="t" style="top:354.45px;font-size:9px;color:#333333;right:1136.40px;transform-origin:100% 0;transform:scaleX(0.9450);">1.433.775,97</span>
<span class="t" style="top:354.45px;font-size:9px;color:#333333;right:1077.70px;transform-origin:100% 0;transform:scaleX(0.9950);">1200000</span>
<span class="t" style="top:354.45px;font-size:9px;color:#333333;right:1014.20px;transform-origin:100% 0;transform:scaleX(0.9900);">233.775,97 €</span>
<span class="t" style="top:354.45px;font-size:9px;color:#333333;right:960.00px;transform-origin:100% 0;transform:scaleX(0.9500);">19,48 %</span>
<span class="t" style="top:371.08px;font-size:9px;color:#333333;left:76.70px;transform-origin:0 0;">Sao Paulo</span>
<span class="t" style="top:371.08px;font-size:9px;color:#333333;right:1136.40px;transform-origin:100% 0;transform:scaleX(0.9450);">134.050,92</span>
<span class="t" style="top:371.08px;font-size:9px;color:#333333;right:1077.70px;transform-origin:100% 0;transform:scaleX(0.9950);">120000</span>
<span class="t" style="top:371.08px;font-size:9px;color:#333333;right:1014.20px;transform-origin:100% 0;transform:scaleX(0.9900);">14.050,92 €</span>
<span class="t" style="top:371.08px;font-size:9px;color:#333333;right:960.00px;transform-origin:100% 0;transform:scaleX(0.9500);">11,71 %</span>
<div class="b" style="left:73px;top:383.1px;width:323.8px;height:16.6px;background:#ececec;"></div>
<div class="b" style="left:154.1px;top:383.1px;width:1px;height:16.6px;background:#f6f6f6;"></div>
<div class="b" style="left:221.5px;top:383.1px;width:1px;height:16.6px;background:#f6f6f6;"></div>
<div class="b" style="left:280.5px;top:383.1px;width:1px;height:16.6px;background:#f6f6f6;"></div>
<div class="b" style="left:343.3px;top:383.1px;width:1px;height:16.6px;background:#f6f6f6;"></div>
<span class="t" style="top:387.71px;font-size:9px;color:#333333;left:76.70px;transform-origin:0 0;">Seattle</span>
<span class="t" style="top:387.71px;font-size:9px;color:#333333;right:1136.40px;transform-origin:100% 0;transform:scaleX(0.9450);">1.526.670,28</span>
<span class="t" style="top:387.71px;font-size:9px;color:#333333;right:1077.70px;transform-origin:100% 0;transform:scaleX(0.9950);">1200000</span>
<span class="t" style="top:387.71px;font-size:9px;color:#333333;right:1014.20px;transform-origin:100% 0;transform:scaleX(0.9900);">326.670,28 €</span>
<span class="t" style="top:387.71px;font-size:9px;color:#333333;right:960.00px;transform-origin:100% 0;transform:scaleX(0.9500);">27,22 %</span>
<span class="t" style="top:404.34px;font-size:9px;color:#333333;left:76.70px;transform-origin:0 0;">Toronto</span>
<span class="t" style="top:404.34px;font-size:9px;color:#333333;right:1136.40px;transform-origin:100% 0;transform:scaleX(0.9450);">702.179,10</span>
<span class="t" style="top:404.34px;font-size:9px;color:#333333;right:1077.70px;transform-origin:100% 0;transform:scaleX(0.9950);">600000</span>
<span class="t" style="top:404.34px;font-size:9px;color:#333333;right:1014.20px;transform-origin:100% 0;transform:scaleX(0.9900);">102.179,10 €</span>
<span class="t" style="top:404.34px;font-size:9px;color:#333333;right:960.00px;transform-origin:100% 0;transform:scaleX(0.9500);">17,03 %</span>
<div class="b" style="left:73px;top:415.6px;width:323.8px;height:1px;background:#9fd0ee;"></div>
<div class="b" style="left:73px;top:416.3px;width:323.8px;height:16.4px;background:#1c1c1c;"></div>
<div class="b" style="left:154.1px;top:416.5px;width:1px;height:16px;background:#6a6a6a;"></div>
<div class="b" style="left:221.5px;top:416.5px;width:1px;height:16px;background:#6a6a6a;"></div>
<div class="b" style="left:280.5px;top:416.5px;width:1px;height:16px;background:#6a6a6a;"></div>
<div class="b" style="left:343.3px;top:416.5px;width:1px;height:16px;background:#6a6a6a;"></div>
<span class="t" style="top:420.26px;font-size:9.5px;color:#fff;font-weight:700;left:76.70px;transform-origin:0 0;transform:scaleX(0.9500);">Total</span>
<span class="t" style="top:420.26px;font-size:9.5px;color:#fff;font-weight:700;right:1136.10px;transform-origin:100% 0;">16.348.978,73</span>
<span class="t" style="top:420.26px;font-size:9.5px;color:#fff;font-weight:700;right:1077.70px;transform-origin:100% 0;">15360000</span>
<span class="t" style="top:420.26px;font-size:9.5px;color:#fff;font-weight:700;right:1014.20px;transform-origin:100% 0;">988.978,73 €</span>
<span class="t" style="top:420.26px;font-size:9.5px;color:#fff;font-weight:700;right:960.00px;transform-origin:100% 0;transform:scaleX(0.9900);">6,44 %</span>
<span class="t" style="top:162.74px;font-size:12px;color:#333;left:401.20px;transform-origin:0 0;transform:scaleX(0.9447);">Venta por Mes</span>
<div class="b" style="left:466.7px;top:190.4px;width:94.0px;height:13.5px;background:#a38800;"></div>
<span class="t" style="top:193.28px;font-size:9px;color:#808080;right:894.70px;transform-origin:100% 0;transform:scaleX(0.9550);">enero</span>
<div class="b" style="left:466.7px;top:208.1px;width:85.9px;height:13.5px;background:#a38800;"></div>
<span class="t" style="top:210.99px;font-size:9px;color:#808080;right:894.70px;transform-origin:100% 0;transform:scaleX(0.9550);">febrero</span>
<div class="b" style="left:466.7px;top:225.8px;width:92.3px;height:13.5px;background:#a38800;"></div>
<span class="t" style="top:228.70px;font-size:9px;color:#808080;right:894.70px;transform-origin:100% 0;transform:scaleX(0.9550);">marzo</span>
<div class="b" style="left:466.7px;top:243.5px;width:89.2px;height:13.5px;background:#a38800;"></div>
<span class="t" style="top:246.41px;font-size:9px;color:#808080;right:894.70px;transform-origin:100% 0;transform:scaleX(0.9550);">abril</span>
<div class="b" style="left:466.7px;top:261.2px;width:91.2px;height:13.5px;background:#a38800;"></div>
<span class="t" style="top:264.12px;font-size:9px;color:#808080;right:894.70px;transform-origin:100% 0;transform:scaleX(0.9550);">mayo</span>
<div class="b" style="left:466.7px;top:278.9px;width:89.2px;height:13.5px;background:#a38800;"></div>
<span class="t" style="top:281.83px;font-size:9px;color:#808080;right:894.70px;transform-origin:100% 0;transform:scaleX(0.9550);">junio</span>
<div class="b" style="left:466.7px;top:296.7px;width:92.8px;height:13.5px;background:#a38800;"></div>
<span class="t" style="top:299.54px;font-size:9px;color:#808080;right:894.70px;transform-origin:100% 0;transform:scaleX(0.9550);">julio</span>
<div class="b" style="left:466.7px;top:314.4px;width:92.3px;height:13.5px;background:#a38800;"></div>
<span class="t" style="top:317.25px;font-size:9px;color:#808080;right:894.70px;transform-origin:100% 0;transform:scaleX(0.9550);">agosto</span>
<div class="b" style="left:466.7px;top:332.1px;width:90.0px;height:13.5px;background:#a38800;"></div>
<span class="t" style="top:334.95px;font-size:9px;color:#808080;right:894.70px;transform-origin:100% 0;transform:scaleX(0.9550);">septiembre</span>
<div class="b" style="left:466.7px;top:349.8px;width:96.3px;height:13.5px;background:#a38800;"></div>
<span class="t" style="top:352.66px;font-size:9px;color:#808080;right:894.70px;transform-origin:100% 0;transform:scaleX(0.9550);">octubre</span>
<div class="b" style="left:466.7px;top:367.5px;width:91.2px;height:13.5px;background:#a38800;"></div>
<span class="t" style="top:370.37px;font-size:9px;color:#808080;right:894.70px;transform-origin:100% 0;transform:scaleX(0.9550);">noviembre</span>
<div class="b" style="left:466.7px;top:385.2px;width:91.2px;height:13.5px;background:#a38800;"></div>
<span class="t" style="top:388.08px;font-size:9px;color:#808080;right:894.70px;transform-origin:100% 0;transform:scaleX(0.9550);">diciembre</span>
<span class="t" style="top:410.18px;font-size:9px;color:#888;left:454.55px;transform-origin:50% 0;transform:scaleX(0.8600);">0 mill.</span>
<span class="t" style="top:410.18px;font-size:9px;color:#888;left:522.85px;transform-origin:50% 0;transform:scaleX(0.8600);">1 mill.</span>
<span class="t" style="top:423.01px;font-size:10.5px;color:#333;left:503.87px;transform-origin:50% 0;transform:scaleX(0.9300);">Venta</span>
<span class="t" style="left:406px;top:294.4px;font-size:10px;color:#333;transform:translate(-50%,-50%) rotate(-90deg) scaleX(0.95);">Mes</span>
<svg class="b" style="left:576px;top:414px;" width="80" height="22" viewBox="0 0 80 22"><path d="M3.500 3.500h15l-5.700 7.500v7h-3.600v-7z" fill="none" stroke="#605e5c" stroke-width="1.100" stroke-linejoin="round"/><path d="M38 3.500h-6.500v14h14v-6.500M31.500 10.500h7v7M41 3.500h4.500v4.500M45.500 3.500l-6 6" fill="none" stroke="#605e5c" stroke-width="1.100"/><circle cx="61" cy="10" r="1.100" fill="#605e5c"/><circle cx="66.800" cy="10" r="1.100" fill="#605e5c"/><circle cx="72.600" cy="10" r="1.100" fill="#605e5c"/></svg>
<span class="t" style="top:162.74px;font-size:12px;color:#333;left:586.00px;transform-origin:0 0;transform:scaleX(0.9779);">Venta por Trimestre</span>
<svg class="b" style="left:600px;top:180px;" width="360" height="240" viewBox="0 0 360 240"><path d="M125.80 35.40A83 83 0 0 1 208.79 117.36L175.40 117.78A49.6 49.6 0 0 0 125.80 68.80z" fill="#efe29e"/><path d="M208.79 117.36A83 83 0 0 1 128.56 201.35L127.45 167.97A49.6 49.6 0 0 0 175.40 117.78z" fill="#e9d46c"/><path d="M128.56 201.35A83 83 0 0 1 42.83 120.64L76.22 119.74A49.6 49.6 0 0 0 127.45 167.97z" fill="#dfc12f"/><path d="M42.83 120.64A83 83 0 0 1 125.80 35.40L125.80 68.80A49.6 49.6 0 0 0 76.22 119.74z" fill="#a38800"/><path d="M170.5 32.5h-8l-4.500 8" fill="none" stroke="#a6a6a6" stroke-width="1"/><path d="M81 32.5h6l4.500 7" fill="none" stroke="#a6a6a6" stroke-width="1"/><path d="M173.5 204h-6l-4.500-7" fill="none" stroke="#a6a6a6" stroke-width="1"/><path d="M84.5 206h6l3-3" fill="none" stroke="#a6a6a6" stroke-width="1"/><circle cx="270.4" cy="98.69999999999999" r="2.800" fill="#efe29e"/><circle cx="270.4" cy="115.60000000000002" r="2.800" fill="#e9d46c"/><circle cx="270.4" cy="132.8" r="2.800" fill="#dfc12f"/><circle cx="270.4" cy="150.5" r="2.800" fill="#a38800"/></svg>
<span class="t" style="top:207.62px;font-size:12.5px;color:#666;left:772.80px;transform-origin:0 0;transform:scaleX(0.9202);">4,06 mill. (24,8%)</span>
<span class="t" style="top:199.52px;font-size:12.5px;color:#666;right:675.70px;transform-origin:100% 0;transform:scaleX(0.9396);">4,16 mill.</span>
<span class="t" style="top:215.02px;font-size:12.5px;color:#666;right:675.70px;transform-origin:100% 0;transform:scaleX(0.9069);">(25,43%)</span>
<span class="t" style="top:370.22px;font-size:12.5px;color:#666;left:775.60px;transform-origin:0 0;transform:scaleX(0.9476);">4,03 mill.</span>
<span class="t" style="top:386.22px;font-size:12.5px;color:#666;left:775.60px;transform-origin:0 0;transform:scaleX(0.8971);">(24,67%)</span>
<span class="t" style="top:380.42px;font-size:12.5px;color:#666;left:598.90px;transform-origin:0 0;transform:scaleX(0.9246);">4,1 mill. (25,1%)</span>
<span class="t" style="top:259.16px;font-size:9.5px;color:#333;font-weight:700;left:866.30px;transform-origin:0 0;transform:scaleX(0.9428);">Fecha Trimestre</span>
<span class="t" style="top:274.88px;font-size:9px;color:#666;left:876.00px;transform-origin:0 0;transform:scaleX(0.9398);">Trim. 1</span>
<span class="t" style="top:291.78px;font-size:9px;color:#666;left:876.00px;transform-origin:0 0;transform:scaleX(0.9398);">Trim. 2</span>
<span class="t" style="top:308.98px;font-size:9px;color:#666;left:876.00px;transform-origin:0 0;transform:scaleX(0.9398);">Trim. 3</span>
<span class="t" style="top:326.68px;font-size:9px;color:#666;left:876.00px;transform-origin:0 0;transform:scaleX(0.9398);">Trim. 4</span>
<span class="t" style="top:464.03px;font-size:38px;color:#252423;left:73.60px;transform-origin:0 0;transform:scaleX(0.8749);-webkit-text-stroke:0.5px #252423;">16,35</span>
<span class="t" style="top:507.90px;font-size:36.5px;color:#252423;left:86.00px;transform-origin:0 0;transform:scaleX(1.0327);-webkit-text-stroke:0.5px #252423;">mill.</span>
<span class="t" style="top:547.99px;font-size:11px;color:#605e5c;left:100.13px;transform-origin:50% 0;transform:scaleX(0.9453);">Venta</span>
<span class="t" style="top:580.93px;font-size:10px;color:#505050;left:76.30px;transform-origin:0 0;transform:scaleX(0.8709);">Región</span>
<span class="t" style="top:580.93px;font-size:10px;color:#505050;left:115.70px;transform-origin:0 0;transform:scaleX(0.8450);">Canada</span>
<span class="t" style="top:580.93px;font-size:10px;color:#505050;left:171.20px;transform-origin:0 0;transform:scaleX(0.8469);">Chile</span>
<span class="t" style="top:580.93px;font-size:10px;color:#505050;left:233.90px;transform-origin:0 0;transform:scaleX(0.9138);">Colombia</span>
<span class="t" style="top:580.93px;font-size:10px;color:#505050;left:297.10px;transform-origin:0 0;transform:scaleX(0.8852);">Estados Unidos</span>
<span class="t" style="top:580.93px;font-size:10px;color:#505050;left:367.50px;transform-origin:0 0;transform:scaleX(0.8966);">Mexico</span>
<span class="t" style="top:580.93px;font-size:10px;color:#505050;left:429.50px;transform-origin:0 0;transform:scaleX(0.8284);">Perú</span>
<span class="t" style="top:580.93px;font-size:10px;color:#505050;left:492.50px;transform-origin:0 0;transform:scaleX(0.8968);">Uruguay</span>
<span class="t" style="top:580.93px;font-size:10px;color:#505050;left:555.70px;transform-origin:0 0;transform:scaleX(0.8713);">Venezuela</span>
<span class="t" style="top:580.93px;font-size:10px;color:#222;font-weight:700;left:611.70px;transform-origin:0 0;transform:scaleX(0.8900);">Total</span>
<svg class="b" style="left:611px;top:590px;" width="8" height="5" viewBox="0 0 8 5"><path d="M1 0.500h6l-3 3.500z" fill="#333"/></svg>
<div class="b" style="left:72.5px;top:596.6px;width:599.5px;height:1px;background:#a6cfea;"></div>
<div class="b" style="left:72.5px;top:611.4px;width:599.5px;height:12.8px;background:#ececec;"></div>
<div class="b" style="left:166px;top:611.4px;width:1px;height:12.8px;background:#f6f6f6;"></div>
<div class="b" style="left:229px;top:611.4px;width:1px;height:12.8px;background:#f6f6f6;"></div>
<div class="b" style="left:292px;top:611.4px;width:1px;height:12.8px;background:#f6f6f6;"></div>
<div class="b" style="left:362px;top:611.4px;width:1px;height:12.8px;background:#f6f6f6;"></div>
<div class="b" style="left:425px;top:611.4px;width:1px;height:12.8px;background:#f6f6f6;"></div>
<div class="b" style="left:488px;top:611.4px;width:1px;height:12.8px;background:#f6f6f6;"></div>
<div class="b" style="left:551px;top:611.4px;width:1px;height:12.8px;background:#f6f6f6;"></div>
<div class="b" style="left:606px;top:611.4px;width:1px;height:12.8px;background:#f6f6f6;"></div>
<div class="b" style="left:109px;top:597px;width:1px;height:53px;background:#a6cfea;"></div>
<span class="t" style="top:599.74px;font-size:10px;color:#333;left:76.30px;transform-origin:0 0;transform:scaleX(0.9200);">Sur</span>
<span class="t" style="top:600.16px;font-size:9.5px;color:#333;right:1128.60px;transform-origin:100% 0;transform:scaleX(0.9120);">1.433.775,97</span>
<span class="t" style="top:600.16px;font-size:9.5px;color:#333;right:1065.40px;transform-origin:100% 0;transform:scaleX(0.9120);">1.322.433,64</span>
<span class="t" style="top:600.16px;font-size:9.5px;color:#333;right:870.00px;transform-origin:100% 0;transform:scaleX(0.9120);">1.598.770,90</span>
<span class="t" style="top:600.16px;font-size:9.5px;color:#333;right:806.80px;transform-origin:100% 0;transform:scaleX(0.9120);">1.567.401,87</span>
<span class="t" style="top:600.16px;font-size:9.5px;color:#333;right:751.60px;transform-origin:100% 0;transform:scaleX(0.9120);">131.629,83</span>
<span class="t" style="top:600.16px;font-size:9.5px;color:#222;font-weight:700;right:683.10px;transform-origin:100% 0;transform:scaleX(0.9750);">7.851.774,71</span>
<span class="t" style="top:613.13px;font-size:10px;color:#333;left:76.30px;transform-origin:0 0;transform:scaleX(0.9200);">Central</span>
<span class="t" style="top:613.56px;font-size:9.5px;color:#333;right:932.80px;transform-origin:100% 0;transform:scaleX(0.9120);">4.693.735,29</span>
<span class="t" style="top:613.56px;font-size:9.5px;color:#222;font-weight:700;right:683.10px;transform-origin:100% 0;transform:scaleX(0.9750);">4.693.735,29</span>
<span class="t" style="top:626.84px;font-size:10px;color:#333;left:76.30px;transform-origin:0 0;transform:scaleX(0.9200);">Norte</span>
<span class="t" style="top:627.26px;font-size:9.5px;color:#333;right:1191.60px;transform-origin:100% 0;transform:scaleX(0.9120);">702.179,10</span>
<span class="t" style="top:627.26px;font-size:9.5px;color:#333;right:995.10px;transform-origin:100% 0;transform:scaleX(0.9120);">3.101.289,64</span>
<span class="t" style="top:627.26px;font-size:9.5px;color:#222;font-weight:700;right:683.10px;transform-origin:100% 0;transform:scaleX(0.9750);">3.803.468,73</span>
<span class="t" style="top:639.93px;font-size:10px;color:#222;font-weight:700;left:76.30px;transform-origin:0 0;transform:scaleX(0.9200);">Total</span>
<span class="t" style="top:640.36px;font-size:9.5px;color:#222;font-weight:700;right:1191.60px;transform-origin:100% 0;transform:scaleX(0.9750);">702.179,10</span>
<span class="t" style="top:640.36px;font-size:9.5px;color:#222;font-weight:700;right:1128.60px;transform-origin:100% 0;transform:scaleX(0.9750);">1.433.775,97</span>
<span class="t" style="top:640.36px;font-size:9.5px;color:#222;font-weight:700;right:1065.40px;transform-origin:100% 0;transform:scaleX(0.9750);">1.322.433,64</span>
<span class="t" style="top:640.36px;font-size:9.5px;color:#222;font-weight:700;right:995.10px;transform-origin:100% 0;transform:scaleX(0.9750);">3.101.289,64</span>
<span class="t" style="top:640.36px;font-size:9.5px;color:#222;font-weight:700;right:932.80px;transform-origin:100% 0;transform:scaleX(0.9750);">4.693.735,29</span>
<span class="t" style="top:640.36px;font-size:9.5px;color:#222;font-weight:700;right:870.00px;transform-origin:100% 0;transform:scaleX(0.9750);">1.598.770,90</span>
<span class="t" style="top:640.36px;font-size:9.5px;color:#222;font-weight:700;right:806.80px;transform-origin:100% 0;transform:scaleX(0.9750);">1.567.401,87</span>
<span class="t" style="top:640.36px;font-size:9.5px;color:#222;font-weight:700;right:751.60px;transform-origin:100% 0;transform:scaleX(0.9750);">131.629,83</span>
<span class="t" style="top:640.36px;font-size:9.5px;color:#222;font-weight:700;right:683.10px;transform-origin:100% 0;transform:scaleX(0.9750);">16.348.978,73</span>
<div class="b" style="left:72.5px;top:650.8px;width:599.5px;height:5.8px;background:#f1f1f1;"></div>
<div class="b" style="left:187.5px;top:650.8px;width:470px;height:5.8px;background:#cdcdcd;"></div>
<span class="t" style="top:650.33px;font-size:8px;color:#555;left:78.96px;transform-origin:50% 0;transform:scaleX(0.8000);">&lt;</span>
<span class="t" style="top:650.33px;font-size:8px;color:#555;left:665.06px;transform-origin:50% 0;transform:scaleX(0.8000);">&gt;</span>
<div class="b" style="left:166px;top:436px;width:489px;height:138.500px;border:1px solid #a6a6a6;"></div>
<svg class="b" style="left:160px;top:430px;" width="500" height="150" viewBox="0 0 500 150"><rect x="5.5" y="5.0" width="9.5" height="3.5" fill="#a0a0a0"/><rect x="5.5" y="5.0" width="3.5" height="9.5" fill="#a0a0a0"/><rect x="486.2" y="5.0" width="9.5" height="3.5" fill="#a0a0a0"/><rect x="492.2" y="5.0" width="3.5" height="9.5" fill="#a0a0a0"/><rect x="5.5" y="141.5" width="9.5" height="3.5" fill="#a0a0a0"/><rect x="5.5" y="135.5" width="3.5" height="9.5" fill="#a0a0a0"/><rect x="486.2" y="141.5" width="9.5" height="3.5" fill="#a0a0a0"/><rect x="492.2" y="135.5" width="3.5" height="9.5" fill="#a0a0a0"/><rect x="245.2" y="5.0" width="11.8" height="3.5" fill="#a0a0a0"/><rect x="245.2" y="141.5" width="11.8" height="3.5" fill="#a0a0a0"/><rect x="5.5" y="69.0" width="3.5" height="12" fill="#a0a0a0"/><rect x="492.2" y="69.0" width="3.5" height="12" fill="#a0a0a0"/><path d="M52 29.6H485" stroke="#e2e2e2" stroke-width="1" stroke-dasharray="1.500 2.500"/><path d="M52 74.0H485" stroke="#e2e2e2" stroke-width="1" stroke-dasharray="1.500 2.500"/><path d="M52 117.8H485" stroke="#e2e2e2" stroke-width="1" stroke-dasharray="1.500 2.500"/><path d="M216.8 28V118" stroke="#b0b0b0" stroke-width="1.500"/><path d="M102.0 93.0L216.8 103.6L331.3 73.8L446.0 47.4" fill="none" stroke="#a38800" stroke-width="2" stroke-linejoin="round"/><circle cx="216.8" cy="103.6" r="2.400" fill="#a38800"/></svg>
<span class="t" style="top:437.04px;font-size:12px;color:#333;left:168.30px;transform-origin:0 0;">Venta por Trimestre</span>
<span class="t" style="top:455.78px;font-size:9px;color:#999;left:181.50px;transform-origin:0 0;transform:scaleX(0.8869);">4,2 mill.</span>
<span class="t" style="top:500.18px;font-size:9px;color:#999;left:181.50px;transform-origin:0 0;transform:scaleX(0.8869);">4,1 mill.</span>
<span class="t" style="top:543.98px;font-size:9px;color:#999;left:181.50px;transform-origin:0 0;transform:scaleX(0.8869);">4,0 mill.</span>
<span class="t" style="top:552.28px;font-size:9px;color:#999;left:248.17px;transform-origin:50% 0;transform:scaleX(0.8600);">Trim. 1</span>
<span class="t" style="top:552.28px;font-size:9px;color:#999;left:362.97px;transform-origin:50% 0;transform:scaleX(0.8600);">Trim. 2</span>
<span class="t" style="top:552.28px;font-size:9px;color:#999;left:477.47px;transform-origin:50% 0;transform:scaleX(0.8600);">Trim. 3</span>
<span class="t" style="top:552.28px;font-size:9px;color:#999;left:592.17px;transform-origin:50% 0;transform:scaleX(0.8600);">Trim. 4</span>
<span class="t" style="top:564.13px;font-size:8px;color:#333;left:417.26px;transform-origin:50% 0;transform:scaleX(0.9000);">Trimestre</span>
<span class="t" style="left:173.800px;top:503.500px;font-size:8px;color:#333;transform:translate(-50%,-50%) rotate(-90deg) scaleX(0.92);">Venta</span>
<div class="b" style="left:408.3px;top:475.8px;width:159.4px;height:71.8px;background:rgba(48,48,48,0.95);"></div>
<svg class="b" style="left:401px;top:525.5px;" width="8" height="16" viewBox="0 0 8 16"><path d="M8 0v16l-7-8z" fill="#3c3c3c"/></svg>
<span class="t" style="top:494.82px;font-size:12.5px;color:#fff;font-weight:700;left:424.00px;transform-origin:0 0;transform:scaleX(1.0498);">Trim. 2</span>
<div class="b" style="left:423.8px;top:516px;width:10px;height:10px;background:#a38800;border-radius:50%;"></div>
<span class="t" style="top:515.74px;font-size:12px;color:#e6e6e6;left:441.50px;transform-origin:0 0;transform:scaleX(0.9610);">Venta</span>
<span class="t" style="top:515.74px;font-size:12px;color:#fff;font-weight:700;left:483.00px;transform-origin:0 0;transform:scaleX(0.9791);">4.032.992,73</span>
<svg class="b" style="left:676px;top:453px;overflow:hidden;" width="269.5" height="203" viewBox="0 0 269.5 203"><rect x="0" y="0" width="269.5" height="203" fill="#c9c9c9"/><path d="M-33.5 34.2L-27.4 23.4L-21.4 20.4L-6.3 23.4L6.8 23.4L19.9 29.0L27.0 29.0L39.0 29.0L41.1 17.2L47.1 29.0L53.1 26.2L54.1 36.6L48.1 38.9L42.1 45.5L41.1 51.4L46.1 53.3L53.1 56.9L55.2 63.6L56.2 58.6L58.2 53.3L57.2 43.4L62.2 43.4L65.2 47.5L70.3 47.5L73.3 53.3L79.3 62.0L75.3 65.2L69.3 65.2L70.3 68.3L74.3 71.2L69.3 74.1L65.2 75.4L64.2 78.2L61.2 79.5L59.2 83.3L59.2 85.8L54.1 90.6L55.2 95.2L54.1 97.5L52.1 93.0L49.1 91.8L45.1 93.0L41.1 93.0L38.0 95.2L37.0 100.8L39.0 104.0L44.1 105.1L45.1 101.9L48.1 101.9L47.1 107.2L51.1 108.2L52.1 112.4L55.2 114.4L58.2 115.4L55.2 116.4L51.1 114.4L48.1 110.3L43.1 109.3L39.0 107.2L30.0 102.9L29.0 99.7L24.9 95.2L21.9 90.6L19.9 90.6L24.9 99.7L22.9 97.5L19.9 93.0L17.9 88.3L14.9 87.1L12.9 83.3L10.8 79.5L10.8 71.2L11.9 66.7L6.8 63.6L3.8 56.9L-0.2 51.4L-5.3 47.5L-12.3 45.5L-17.4 49.5L-23.4 53.3L-29.4 58.6L-25.4 51.4L-30.4 45.5L-31.4 38.9zM62.2 -6.5L75.3 -30.0L105.5 -42.0L123.6 -30.0L117.6 -6.5L115.6 10.3L111.5 23.4L103.5 29.0L95.4 36.6L92.4 47.5L87.4 45.5L83.4 36.6L81.3 23.4L77.3 6.5L67.2 2.5zM55.2 12.1L63.2 20.4L73.3 34.2L70.3 43.4L63.2 38.9L57.2 36.6L60.2 29.0L50.1 23.4L45.1 13.8zM17.9 15.5L30.0 13.8L33.0 26.2L19.9 26.2zM10.8 2.5L24.9 -6.5L40.0 -17.1L55.2 -37.7L73.3 -33.7L59.2 -6.5L50.1 2.5L40.0 8.4L19.9 10.3zM9.8 10.3L18.9 12.1L16.9 18.8L9.8 17.2zM58.2 115.4L63.2 111.3L67.2 112.4L73.3 113.4L78.3 117.4L83.4 118.5L85.4 123.5L91.4 125.5L97.4 127.5L100.5 130.6L98.5 135.7L96.4 140.9L94.4 146.2L87.4 150.6L86.4 154.0L82.3 159.9L78.3 161.2L77.3 164.9L73.3 166.2L70.3 168.8L70.3 174.4L67.2 181.8L66.2 185.0L67.2 190.1L63.2 186.7L60.2 181.8L61.2 172.9L62.2 163.7L64.2 155.2L65.2 147.3L65.2 141.9L59.2 137.7L56.2 131.6L54.1 128.5L55.2 125.5L55.2 122.5L57.2 120.5zM126.7 83.3L126.7 75.4L133.7 75.4L134.7 71.2L131.7 68.3L136.7 65.2L139.7 62.0L143.8 58.6L143.8 53.3L146.8 55.1L145.8 58.6L149.8 58.6L154.8 58.6L156.9 53.3L159.9 51.4L163.9 47.5L158.9 47.5L156.9 41.2L160.9 36.6L157.9 34.2L153.8 41.2L152.8 47.5L151.8 55.1L148.8 55.1L146.8 49.5L141.8 51.4L140.7 43.4L146.8 36.6L150.8 29.0L155.9 23.4L163.9 20.4L167.9 23.4L177.0 31.6L171.0 34.2L170.0 38.9L176.0 38.9L180.0 34.2L180.0 29.0L190.1 29.0L196.1 26.2L204.2 26.2L204.2 17.2L209.2 17.2L211.2 29.0L210.2 17.2L216.3 13.8L223.3 6.5L234.4 2.5L241.4 -4.1L249.5 10.3L259.6 13.8L266.6 20.4L276.7 13.8L286.8 20.4L296.8 23.4L306.9 23.4L317.0 26.2L317.0 36.6L315.0 43.4L306.9 47.5L299.9 51.4L298.8 56.9L293.8 63.6L292.8 53.3L296.8 45.5L291.8 49.5L279.7 49.5L271.7 56.9L276.7 60.3L276.7 68.3L271.7 75.4L266.6 76.8L264.6 80.8L265.6 85.8L262.6 87.1L262.6 83.3L257.6 80.8L254.5 82.1L258.6 83.3L255.5 87.1L258.6 90.6L257.6 94.1L254.5 98.6L249.5 100.8L245.5 101.9L242.5 104.0L245.5 110.3L243.5 113.4L241.4 114.4L239.4 111.3L236.4 110.3L235.4 114.4L239.4 118.5L240.4 122.5L237.4 120.5L234.4 115.4L234.4 108.2L230.4 107.2L228.4 101.9L224.3 100.8L222.3 102.9L216.3 108.2L216.3 112.4L213.3 115.4L209.2 107.2L208.2 101.9L204.2 99.7L202.2 97.5L196.1 97.5L193.1 95.2L192.1 96.4L187.1 98.6L184.0 93.0L186.1 91.8L192.1 95.2L195.1 99.7L191.1 106.1L181.0 110.3L179.0 110.3L176.0 105.1L171.0 94.1L168.9 93.0L171.0 88.3L172.0 84.6L166.9 83.3L162.9 83.3L161.9 80.8L164.9 78.2L171.0 76.8L177.0 78.2L177.0 75.4L173.0 72.6L168.9 72.6L165.9 71.2L163.9 75.4L161.9 79.5L158.9 79.5L158.9 82.1L156.9 82.1L154.8 76.8L149.8 72.6L147.8 74.1L151.8 78.2L153.8 79.5L151.8 82.1L147.8 76.8L144.8 74.1L138.7 75.4L135.7 79.5L135.7 82.1L130.7 84.6zM129.7 84.6L145.8 83.3L146.8 88.3L155.9 90.6L160.9 89.5L167.9 90.6L170.0 94.1L173.0 100.8L175.0 108.2L179.0 111.3L187.1 111.3L183.0 119.5L176.0 126.5L175.0 133.6L176.0 139.8L171.0 148.4L167.9 154.0L162.9 159.9L155.9 161.2L153.8 157.5L150.8 151.8L147.8 140.9L149.8 133.6L144.8 124.5L144.8 119.5L139.7 117.4L131.7 118.5L127.7 119.5L122.6 115.4L118.6 111.3L118.6 101.9L122.6 94.1L125.6 90.6zM185.1 135.7L186.1 139.8L183.0 149.5L180.0 147.3L180.0 140.9zM130.7 65.2L136.7 63.6L135.7 60.3L133.7 55.1L132.7 50.5L129.7 53.3L130.7 58.6L132.7 60.3L130.7 62.0zM125.6 62.0L129.7 62.0L129.7 56.9L127.7 56.9L125.6 58.6zM111.5 36.6L113.6 32.9L120.6 32.9L121.6 36.6L117.6 40.1L113.6 38.9zM250.5 146.2L250.5 159.9L254.5 161.2L260.6 158.7L265.6 157.5L269.6 157.5L272.7 161.2L276.7 164.9L283.7 164.9L286.8 162.4L289.8 152.9L282.7 143.0L278.7 134.6L277.7 140.9L272.7 135.7L269.6 135.7L266.6 136.7L262.6 137.7L258.6 141.9zM231.4 118.5L234.4 119.5L239.4 123.5L242.5 129.6L240.4 128.5zM245.5 122.5L250.5 127.5L253.5 124.5L254.5 118.5L251.5 116.4zM241.4 129.6L244.5 129.6L250.5 130.6L250.5 131.6zM255.5 128.5L256.6 122.5L261.6 122.5L258.6 127.5zM256.6 105.1L258.6 105.1L260.6 110.3L262.6 116.4L258.6 116.4L256.6 109.3zM266.6 90.6L267.6 87.1L272.7 85.8L276.7 84.6L277.7 79.5L276.7 78.2L273.7 83.3L269.6 85.8L266.6 88.3zM216.3 114.4L218.3 116.4L216.3 117.4zM257.6 97.5L257.6 100.8L256.6 99.7zM267.6 124.5L270.7 126.5L274.7 125.5L277.7 126.5L277.7 132.6L274.7 131.6L269.6 127.5zM50.1 100.8L55.2 99.7L60.2 102.9L57.2 102.9zM61.2 102.9L66.2 104.0L64.2 105.1L61.2 105.1zM76.3 68.3L79.3 63.6L82.3 69.7L79.3 69.7zM188.1 20.4L193.1 10.3L204.2 -1.8L196.1 2.5L191.1 13.8zM147.8 -6.5L155.9 -20.0L163.9 -17.1L157.9 -1.8L150.8 -1.8zM278.7 71.2L279.7 58.6L278.7 58.6L278.7 65.2z" fill="#e9e9e9" stroke="#e9e9e9" stroke-width="0.800" stroke-linejoin="round"/><path d="M183.0 72.6L188.1 71.2L190.1 78.2L189.1 83.3L186.1 83.3L185.1 78.2zM43.1 69.7L47.1 68.3L51.1 69.7L53.1 72.6L56.2 74.1L55.2 76.8L52.1 76.8L51.1 72.6L48.1 76.8L47.1 74.1L48.1 71.2z" fill="#c9c9c9"/><circle cx="38.7" cy="43.2" r="8.3" fill="#a38800" fill-opacity="0.62" stroke="#7d6900" stroke-opacity="0.750" stroke-width="1"/><circle cx="36.4" cy="80.3" r="15" fill="#a38800" fill-opacity="0.62" stroke="#7d6900" stroke-opacity="0.750" stroke-width="1"/><circle cx="33.0" cy="98.9" r="20.5" fill="#a38800" fill-opacity="0.62" stroke="#7d6900" stroke-opacity="0.750" stroke-width="1"/><circle cx="61.9" cy="117.7" r="9" fill="#a38800" fill-opacity="0.62" stroke="#7d6900" stroke-opacity="0.750" stroke-width="1"/><circle cx="68.5" cy="111.8" r="6" fill="#a38800" fill-opacity="0.62" stroke="#7d6900" stroke-opacity="0.750" stroke-width="1"/><circle cx="60.2" cy="130.0" r="10.6" fill="#a38800" fill-opacity="0.62" stroke="#7d6900" stroke-opacity="0.750" stroke-width="1"/><circle cx="81.7" cy="132.6" r="6" fill="#a38800" fill-opacity="0.62" stroke="#7d6900" stroke-opacity="0.750" stroke-width="1"/><circle cx="64.2" cy="155.8" r="10" fill="#a38800" fill-opacity="0.62" stroke="#7d6900" stroke-opacity="0.750" stroke-width="1"/><circle cx="79.4" cy="157.5" r="10.6" fill="#a38800" fill-opacity="0.62" stroke="#7d6900" stroke-opacity="0.750" stroke-width="1"/><circle cx="70.0" cy="159.8" r="10" fill="#a38800" fill-opacity="0.62" stroke="#7d6900" stroke-opacity="0.750" stroke-width="1"/><rect x="2" y="190" width="3.300" height="3.300" fill="#f25022"/><rect x="5.800" y="190" width="3.300" height="3.300" fill="#7fba00"/><rect x="2" y="193.800" width="3.300" height="3.300" fill="#00a4ef"/><rect x="5.800" y="193.800" width="3.300" height="3.300" fill="#ffb900"/></svg>
<span class="t" style="top:437.74px;font-size:12px;color:#333;left:676.00px;transform-origin:0 0;transform:scaleX(0.9400);">Venta por País</span>
<span class="t" style="top:501.20px;font-size:13px;color:#5a5a5a;left:695.98px;transform-origin:50% 0;transform:scaleX(0.9000);opacity:.85;">AMÉRICA</span>
<span class="t" style="top:514.40px;font-size:13px;color:#5a5a5a;left:712.95px;transform-origin:50% 0;transform:scaleX(0.9000);opacity:.85;">DEL</span>
<span class="t" style="top:527.70px;font-size:13px;color:#5a5a5a;left:702.97px;transform-origin:50% 0;transform:scaleX(0.9000);opacity:.85;">NORTE</span>
<span class="t" style="top:579.90px;font-size:13px;color:#5a5a5a;left:745.68px;transform-origin:50% 0;transform:scaleX(0.9000);opacity:.85;">AMÉRICA</span>
<span class="t" style="top:593.50px;font-size:13px;color:#5a5a5a;left:762.65px;transform-origin:50% 0;transform:scaleX(0.9000);opacity:.85;">DEL</span>
<span class="t" style="top:606.60px;font-size:13px;color:#5a5a5a;left:761.58px;transform-origin:50% 0;transform:scaleX(0.9000);opacity:.85;">SUR</span>
<span class="t" style="top:512.10px;font-size:13px;color:#5a5a5a;left:823.30px;transform-origin:0 0;transform:scaleX(0.8714);opacity:.85;">EUROPA</span>
<span class="t" style="top:505.20px;font-size:13px;color:#5a5a5a;left:907.70px;transform-origin:0 0;transform:scaleX(0.8877);opacity:.85;">ASIA</span>
<span class="t" style="top:564.80px;font-size:13px;color:#5a5a5a;left:825.60px;transform-origin:0 0;transform:scaleX(0.8684);opacity:.85;">ÁFRICA</span>
<span class="t" style="top:594.60px;font-size:13px;color:#5a5a5a;left:936.30px;transform-origin:0 0;transform:scaleX(0.9000);opacity:.85;">O</span>
<span class="t" style="top:539.60px;font-size:8.5px;color:#8a8a8a;left:761.11px;transform-origin:50% 0;transform:scaleX(0.8800);">Océano</span>
<span class="t" style="top:547.70px;font-size:8.5px;color:#8a8a8a;left:759.70px;transform-origin:50% 0;transform:scaleX(0.8800);">Atlántico</span>
<span class="t" style="top:592.60px;font-size:8.5px;color:#8a8a8a;left:880.11px;transform-origin:50% 0;transform:scaleX(0.8800);">Océano</span>
<span class="t" style="top:600.70px;font-size:8.5px;color:#8a8a8a;left:883.66px;transform-origin:50% 0;transform:scaleX(0.8800);">Índico</span>
<span class="t" style="top:644.60px;font-size:6.5px;color:#6a6a6a;left:688.00px;transform-origin:0 0;transform:scaleX(0.8499);">Microsoft Bing</span>
<span class="t" style="top:645.17px;font-size:7px;color:#4a4a4a;left:776.00px;transform-origin:0 0;transform:scaleX(0.8916);">© 2021 TomTom, © 2021 Microsoft Corporation</span>
<span class="t" style="top:645.17px;font-size:7px;color:#3a6fb0;left:912.00px;transform-origin:0 0;transform:scaleX(0.8396);text-decoration:underline;">Terms</span>
</div></div>
<!-- panes -->
<div class="b" style="left:971.2px;top:160px;width:1px;height:508px;background:#bebbb8;"></div>
<svg class="b" style="left:972.5px;top:159px;" width="32" height="120" viewBox="972.5 159 32 120"><path d="M990.6 178.10000000000002l-5.2 5.2 5.2 5.2" fill="none" stroke="#605e5c" stroke-width="1.2"/><path d="M995.500 225v11.500l-6.300-4.200h-4.200v-3.100h4.200z" fill="none" stroke="#605e5c" stroke-width="1" stroke-linejoin="round"/></svg>
<span class="t" style="left:989.300px;top:271.200px;font-size:17px;-webkit-text-stroke:0.35px #252423;color:#252423;transform:translate(-50%,-50%) rotate(90deg) scaleX(0.915);">Filtros</span>
<span class="t" style="top:177.93px;font-size:16.5px;color:#3b3a39;-webkit-text-stroke:0.36px #3b3a39;left:1017.50px;transform-origin:0 0;transform:scaleX(0.9592);">Visualizaciones</span>
<svg class="b" style="left:1004.5px;top:159px;" width="181" height="544" viewBox="1004.5 159 181 544"><path d="M1166.25 177.5l5.5 5.5-5.5 5.5" fill="none" stroke="#605e5c" stroke-width="1.2"/><rect x="1008.600" y="234.600" width="21" height="20.800" fill="#d2d0ce" stroke="#605e5c" stroke-width="1.300"/><g transform="translate(1011.20 213.00)"><path d="M0.500 1v14.500H16" fill="none" stroke="#3b3a39" stroke-width="1" /><rect x="0.5" y="2" width="3.5" height="3.2" fill="#ffffff" stroke="#605e5c" stroke-width="0.7"/><rect x="4" y="2" width="7" height="3.2" fill="#6db3ea" stroke="#2b78c2" stroke-width="0.8"/><rect x="0.5" y="6.2" width="3.5" height="3.2" fill="#ffffff" stroke="#605e5c" stroke-width="0.7"/><rect x="4" y="6.2" width="4.5" height="3.2" fill="#6db3ea" stroke="#2b78c2" stroke-width="0.8"/><rect x="0.5" y="10.5" width="6.5" height="3.2" fill="#ffffff" stroke="#605e5c" stroke-width="0.7"/><rect x="7" y="10.5" width="7.5" height="3.2" fill="#c8c6c4" stroke="#8a8886" stroke-width="0.8"/></g><g transform="translate(1039.15 213.00)"><path d="M0.500 1v14.500H16" fill="none" stroke="#3b3a39" stroke-width="1" /><rect x="3" y="6" width="3.5" height="9.5" fill="#6db3ea" stroke="#2b78c2" stroke-width="0.8"/><rect x="3" y="3" width="3.5" height="3" fill="#ffffff" stroke="#605e5c" stroke-width="0.7"/><rect x="8" y="4" width="3" height="11.5" fill="#c8c6c4" stroke="#8a8886" stroke-width="0.8"/><rect x="8" y="1.5" width="3" height="3" fill="#ffffff" stroke="#605e5c" stroke-width="0.7"/><rect x="12.5" y="5" width="3" height="10.5" fill="#c8c6c4" stroke="#8a8886" stroke-width="0.8"/><rect x="12.5" y="2" width="3" height="3" fill="#ffffff" stroke="#605e5c" stroke-width="0.7"/></g><g transform="translate(1067.10 213.00)"><rect x="0.5" y="1" width="15" height="3.5" fill="#6db3ea" stroke="#2b78c2" stroke-width="0.8"/><rect x="0.5" y="5" width="10.5" height="3.5" fill="#c8c6c4" stroke="#8a8886" stroke-width="0.8"/><rect x="0.5" y="9" width="12.5" height="3.5" fill="#ffffff" stroke="#605e5c" stroke-width="0.7"/><path d="M0.500 0.500v15H16" fill="none" stroke="#8a8886" stroke-width="1.4" /></g><g transform="translate(1095.05 213.00)"><rect x="0.5" y="1" width="4" height="14.5" fill="#6db3ea" stroke="#2b78c2" stroke-width="0.8"/><rect x="5" y="6" width="3" height="9.5" fill="#ffffff" stroke="#605e5c" stroke-width="0.7"/><rect x="8.5" y="9" width="3" height="6.5" fill="#c8c6c4" stroke="#8a8886" stroke-width="0.8"/><rect x="12" y="4.5" width="3.5" height="11" fill="#ffffff" stroke="#605e5c" stroke-width="0.7"/><path d="M0 15.500H16" fill="none" stroke="#8a8886" stroke-width="1.4" /></g><g transform="translate(1123.00 213.00)"><path d="M0.500 1v14.500H16" fill="none" stroke="#3b3a39" stroke-width="1" /><rect x="0.5" y="1.5" width="4" height="3.5" fill="#ffffff" stroke="#605e5c" stroke-width="0.7"/><rect x="4.5" y="1.5" width="10" height="3.5" fill="#6db3ea" stroke="#2b78c2" stroke-width="0.8"/><rect x="0.5" y="6.5" width="6" height="3.5" fill="#ffffff" stroke="#605e5c" stroke-width="0.7"/><rect x="6.5" y="6.5" width="8" height="3.5" fill="#6db3ea" stroke="#2b78c2" stroke-width="0.8"/><rect x="0.5" y="11" width="5" height="3.5" fill="#ffffff" stroke="#605e5c" stroke-width="0.7"/><rect x="5.5" y="11" width="9" height="3.5" fill="#c8c6c4" stroke="#8a8886" stroke-width="0.8"/></g><g transform="translate(1150.95 213.00)"><path d="M0.500 1v14.500H16" fill="none" stroke="#3b3a39" stroke-width="1" /><rect x="2.5" y="4" width="4.5" height="11.5" fill="#6db3ea" stroke="#2b78c2" stroke-width="0.8"/><rect x="2.5" y="1" width="4.5" height="3" fill="#ffffff" stroke="#605e5c" stroke-width="0.7"/><rect x="9.5" y="5" width="4.5" height="10.5" fill="#c8c6c4" stroke="#8a8886" stroke-width="0.8"/><rect x="9.5" y="1" width="4.5" height="4" fill="#ffffff" stroke="#605e5c" stroke-width="0.7"/></g><g transform="translate(1011.20 236.80)"><path d="M0.500 0.500v15H16" fill="none" stroke="#3b3a39" stroke-width="1" /><path d="M1 13.500l5-5 3 2.500 4-6 2.500 2" fill="none" stroke="#2b78c2" stroke-width="1" /><path d="M1 11.500l4.500-6.500 3 4 3-5 4 4" fill="none" stroke="#3b3a39" stroke-width="1" /></g><g transform="translate(1039.15 236.80)"><path d="M5 15.500L10.500 2l5 9v4.500z" fill="#c8c6c4" stroke="#8a8886" stroke-width="1" /><path d="M0.500 15.500v-5L6 2.500l4 7 2.500-3 3 5v4z" fill="#ffffff" stroke="#2b78c2" stroke-width="1" /><path d="M0.500 15.500v-4l4.500 2 5-5 2 2.500 3.500-2v6.500z" fill="#6db3ea" stroke="#2b78c2" stroke-width="1" /></g><g transform="translate(1067.10 236.80)"><path d="M0.500 3.500l4.500 5 5-6 5.500 4v6l-5.500-3.500-5 5-4.500-4z" fill="#6db3ea" stroke="#2b78c2" stroke-width="1" /><path d="M0.500 0.500v15H16" fill="none" stroke="#3b3a39" stroke-width="1" /></g><g transform="translate(1095.05 236.80)"><path d="M0.500 1v14.500H16" fill="none" stroke="#3b3a39" stroke-width="1" /><rect x="3" y="4" width="3.5" height="11.5" fill="#6db3ea" stroke="#2b78c2" stroke-width="0.8"/><rect x="3" y="1.5" width="3.5" height="2.5" fill="#ffffff" stroke="#605e5c" stroke-width="0.7"/><rect x="8" y="6" width="3" height="9.5" fill="#c8c6c4" stroke="#8a8886" stroke-width="0.8"/><rect x="8" y="2" width="3" height="4" fill="#ffffff" stroke="#605e5c" stroke-width="0.7"/><rect x="12.5" y="8" width="3" height="7.5" fill="#c8c6c4" stroke="#8a8886" stroke-width="0.8"/><path d="M1 13l4-5 3.500 4 7-8" fill="none" stroke="#3b3a39" stroke-width="1.1" /></g><g transform="translate(1123.00 236.80)"><path d="M0.500 1v14.500H16" fill="none" stroke="#3b3a39" stroke-width="1" /><rect x="2" y="7" width="3" height="8.5" fill="#6db3ea" stroke="#2b78c2" stroke-width="0.8"/><rect x="5.5" y="2" width="3.5" height="13.5" fill="#ffffff" stroke="#605e5c" stroke-width="0.7"/><rect x="9.5" y="5" width="3" height="10.5" fill="#c8c6c4" stroke="#8a8886" stroke-width="0.8"/><rect x="13" y="9" width="2.5" height="6.5" fill="#ffffff" stroke="#605e5c" stroke-width="0.7"/><path d="M1 13l4-5 3.500 4 7-8" fill="none" stroke="#3b3a39" stroke-width="1.1" /></g><g transform="translate(1150.95 236.80)"><path d="M0.500 3c4 0 4 6.500 8 6.500s4-6.500 7.500-6.500v5c-3.500 0-3.500 6-7.500 6s-4-6-8-6z" fill="#6db3ea" stroke="#2b78c2" stroke-width="1" /><path d="M0.500 9c4 0 4 3.500 8 3.500s4-4.500 7.500-4.500v3c-3.500 0-3.500 4-7.500 4s-4-3-8-3z" fill="#f3c38a" stroke="#d98c2b" stroke-width="1" /><path d="M0.500 0.500v15H16" fill="none" stroke="#3b3a39" stroke-width="1" /></g><g transform="translate(1011.20 260.50)"><path d="M0.500 1v14.500H16" fill="none" stroke="#3b3a39" stroke-width="1" /><rect x="2" y="6" width="2.5" height="9.5" fill="#c8c6c4" stroke="#8a8886" stroke-width="0.8"/><rect x="4.5" y="9" width="4.5" height="6.5" fill="#ffffff" stroke="#605e5c" stroke-width="0.7"/><rect x="9" y="1.5" width="3" height="8" fill="#2b6cb0" stroke="#2b78c2" stroke-width="0.8"/><rect x="12" y="1.5" width="3" height="14" fill="#ffffff" stroke="#605e5c" stroke-width="0.7"/><rect x="6.5" y="4" width="2.5" height="5" fill="#c8c6c4" stroke="#8a8886" stroke-width="0.8"/></g><g transform="translate(1039.15 260.50)"><rect x="0.5" y="1" width="15" height="4" fill="#6db3ea" stroke="#2b78c2" stroke-width="0.8"/><rect x="2.5" y="5" width="11" height="4.5" fill="#6db3ea" stroke="#2b78c2" stroke-width="0.8"/><rect x="4.5" y="9.5" width="7" height="4.5" fill="#6db3ea" stroke="#2b78c2" stroke-width="0.8"/></g><g transform="translate(1067.10 260.50)"><path d="M0.500 0.500v15H16" fill="none" stroke="#3b3a39" stroke-width="1" /><rect x="11" y="1" width="3" height="3" fill="#323130"/><rect x="3" y="3.5" width="3" height="3" fill="#c8c6c4" stroke="#8a8886" stroke-width="0.6"/><rect x="7" y="6.5" width="3" height="3" fill="#c8c6c4" stroke="#8a8886" stroke-width="0.6"/><rect x="2.5" y="10.5" width="3" height="3" fill="#323130"/><rect x="11" y="9.5" width="3" height="3" fill="#c8c6c4" stroke="#8a8886" stroke-width="0.6"/></g><g transform="translate(1095.05 260.50)"><circle cx="8" cy="8" r="7.300" fill="#ffffff" stroke="#3b3a39" stroke-width="1"/><path d="M8 8V0.700A7.300 7.300 0 0 1 13.700 12.500z" fill="#6db3ea" stroke="#2b78c2" stroke-width="1" /></g><g transform="translate(1123.00 260.50)"><circle cx="8" cy="8" r="5.300" fill="none" stroke="#6db3ea" stroke-width="4"/><circle cx="8" cy="8" r="7.300" fill="none" stroke="#2b78c2" stroke-width="0.800"/><circle cx="8" cy="8" r="3.300" fill="#ffffff" stroke="#2b78c2" stroke-width="0.800"/><path d="M8 0.700A7.300 7.300 0 0 0 1.300 5L5 6.500A3.300 3.300 0 0 1 8 4.700z" fill="#ffffff" stroke="#2b78c2" stroke-width="0.8" /></g><g transform="translate(1150.95 260.50)"><rect x="0.5" y="0.5" width="8" height="8" fill="#6db3ea" stroke="#2b78c2" stroke-width="0.8"/><rect x="0.5" y="8.5" width="8" height="7" fill="#6db3ea" stroke="#2b78c2" stroke-width="0.8"/><rect x="8.5" y="0.5" width="7" height="5" fill="#ffffff" stroke="#605e5c" stroke-width="0.7"/><rect x="8.5" y="5.5" width="3.5" height="5" fill="#ffffff" stroke="#605e5c" stroke-width="0.7"/><rect x="12" y="5.5" width="3.5" height="5" fill="#ffffff" stroke="#605e5c" stroke-width="0.7"/><rect x="8.5" y="10.5" width="7" height="4.5" fill="#ffffff" stroke="#605e5c" stroke-width="0.7"/></g><g transform="translate(1011.20 284.70)"><circle cx="8" cy="6.800" r="6" fill="#dff0e0" stroke="#3b3a39" stroke-width="1.100"/><path d="M5 3.500c2-1 3 .500 2 2s-2.500 1-2 3 2 2 2.500 3c-3 0-5-3-4.500-5.500.300-1 1-2 2-2.500zM9.500 2.500l3 1.500c1 1.500 1 3 .500 4.500l-2-1-1-2.500z" fill="#3fa557" stroke="none" stroke-width="1" /><path d="M8 12.800v2.700M3.500 15.500h9" fill="none" stroke="#3b3a39" stroke-width="1.1" /></g><g transform="translate(1039.15 284.70)"><path d="M0.500 2.500l3 1 2.500-1.500 3 1 3-1.500 3.500.500v6l-1.500 3-2.500 1-1.500 2.500-2.500-.500-1.500-2-2.500-1-2-3z" fill="#6db3ea" stroke="#2b78c2" stroke-width="1" stroke-linejoin="round"/><path d="M6 2l3 1 3-1.500 3.500.500v3.500l-4 1-2.500 2.500-4-1.500z" fill="#c8c6c4" stroke="#8a8886" stroke-width="0.6" /><path d="M2.500 8.500l3.500-.500 1.500 2-1 2.500-2.500-1z" fill="#c8c6c4" stroke="#8a8886" stroke-width="0.6" /></g><g transform="translate(1067.10 284.70)"><path d="M0.800 12.500a7.200 7.200 0 0 1 14.400 0h-3.700a3.500 3.500 0 0 0-7 0z" fill="#6db3ea" stroke="#2b78c2" stroke-width="1" /><path d="M0.800 12.500a7.200 7.200 0 0 1 3-5.800l2.200 3a3.500 3.500 0 0 0-1.500 2.800z" fill="#ffffff" stroke="#2b78c2" stroke-width="1" /><path d="M8 12.500l3-4" fill="none" stroke="#3b3a39" stroke-width="1.3" /></g><g transform="translate(1095.05 284.70)"><rect x="0.5" y="1.5" width="15" height="12" fill="#eef4fa" stroke="#8a8886" stroke-width="0.8"/><rect x="0.5" y="12" width="15" height="2" fill="#c8c6c4" stroke="#8a8886" stroke-width="0.5"/><text x="8" y="10.500" font-family="Liberation Sans, sans-serif" font-size="7.500" fill="#2b78c2" text-anchor="middle" textLength="12">123</text></g><g transform="translate(1123.00 284.70)"><rect x="0.5" y="0.5" width="15" height="15" fill="#ffffff" stroke="#605e5c" stroke-width="0.7"/><path d="M2.500 3v10" fill="none" stroke="#8a8886" stroke-width="1.2" /><path d="M4.500 4h8M4.500 8h5.500M4.500 12h7" fill="none" stroke="#2b78c2" stroke-width="1.8" /></g><g transform="translate(1150.95 284.70)"><rect x="0.5" y="1.5" width="15" height="12" fill="#f4f4f4" stroke="#8a8886" stroke-width="0.8"/><path d="M2.500 8.500l2.500-4.500 2.500 4.500z" fill="#52b043" stroke="#2e8b2e" stroke-width="0.6" /><path d="M8.500 3.500h5.500l-2.750 5z" fill="#e8484f" stroke="#c22" stroke-width="0.6" /><path d="M2 11h12" fill="none" stroke="#8a8886" stroke-width="1.4" /></g><g transform="translate(1011.20 309.00)"><rect x="0.5" y="0.5" width="13.5" height="11.5" fill="#ffffff" stroke="#605e5c" stroke-width="0.7"/><rect x="0.5" y="0.5" width="13.5" height="2.5" fill="#c8c6c4" stroke="#8a8886" stroke-width="0.6"/><rect x="2.5" y="5" width="2.5" height="2" fill="#c8c6c4" stroke="#8a8886" stroke-width="0.6"/><rect x="2.5" y="8.5" width="2.5" height="2" fill="#c8c6c4" stroke="#8a8886" stroke-width="0.6"/><path d="M7.500 6.500h8l-3 4v4.500l-2-1v-3.500z" fill="#ffffff" stroke="#3b3a39" stroke-width="1" /></g><g transform="translate(1039.15 309.00)"><rect x="0.5" y="0.5" width="15" height="14.5" fill="#ffffff" stroke="#3b3a39" stroke-width="1"/><rect x="1" y="8" width="14" height="2.5" fill="#e1dfdd"/><path d="M5.500 0.500v14.500M10.500 0.500v14.500M0.500 4h15M0.500 7.800h15M0.500 11.300h15" fill="none" stroke="#605e5c" stroke-width="0.8" /><path d="M0.500 0.800h15" fill="none" stroke="#3b3a39" stroke-width="1.4" /></g><g transform="translate(1067.10 309.00)"><rect x="0.5" y="0.5" width="15" height="14.5" fill="#dcecf9" stroke="#2b78c2" stroke-width="1"/><rect x="0.5" y="4" width="5" height="11" fill="#6db3ea"/><rect x="5.5" y="7.8" width="5" height="3.5" fill="#6db3ea"/><rect x="10.5" y="4" width="5" height="3.8" fill="#6db3ea"/><rect x="10.5" y="11.3" width="5" height="3.7" fill="#6db3ea"/><path d="M5.500 0.500v14.500M10.500 0.500v14.500M0.500 4h15M0.500 7.800h15M0.500 11.300h15" fill="none" stroke="#2b78c2" stroke-width="0.8" /><path d="M0.500 0.800h15" fill="none" stroke="#605e5c" stroke-width="1.4" /></g><g transform="translate(1095.05 309.00)"><text x="8" y="13.300" font-family="Liberation Sans, sans-serif" font-weight="700" font-size="14.500" fill="#2a86c7" text-anchor="middle">R</text></g><g transform="translate(1123.00 309.00)"><text x="8" y="12.500" font-family="Liberation Sans, sans-serif" font-weight="700" font-size="14.500" fill="#2a86c7" text-anchor="middle" textLength="16" lengthAdjust="spacingAndGlyphs">Py</text></g><g transform="translate(1150.95 309.00)"><path d="M0.500 0.500v15H16" fill="none" stroke="#3b3a39" stroke-width="1" /><path d="M1 3h11M1 8h8M1 12.500h5" fill="none" stroke="#3b3a39" stroke-width="1" /><circle cx="13" cy="3" r="1.700" fill="#ffffff" stroke="#2b78c2" stroke-width="1"/><circle cx="10" cy="8" r="1.700" fill="#ffffff" stroke="#2b78c2" stroke-width="1"/><circle cx="7" cy="12.500" r="1.700" fill="#6db3ea" stroke="#2b78c2" stroke-width="1"/></g><g transform="translate(1011.20 332.80)"><rect x="0.5" y="6" width="4.5" height="4" fill="#6db3ea" stroke="#2b78c2" stroke-width="0.8"/><path d="M5 8h3M8 3v10M8 3h2.500M8 8h2.500M8 13h2.500" fill="none" stroke="#2b78c2" stroke-width="1" /><rect x="10.5" y="0.8" width="4.5" height="4" fill="#6db3ea" stroke="#2b78c2" stroke-width="0.8"/><rect x="10.5" y="6" width="4.5" height="4" fill="#6db3ea" stroke="#2b78c2" stroke-width="0.8"/><rect x="10.5" y="11.2" width="4.5" height="4" fill="#6db3ea" stroke="#2b78c2" stroke-width="0.8"/></g><g transform="translate(1039.15 332.80)"><path d="M0.700 1.500h14.600v9.500h-8l-4 4v-4h-2.600z" fill="#ffffff" stroke="#2b78c2" stroke-width="1.2" stroke-linejoin="round"/></g><g transform="translate(1067.10 332.80)"><path d="M2.500 0.500h7.500l4 4v11h-11.500z" fill="#ffffff" stroke="#3b3a39" stroke-width="1" /><path d="M10 0.500v4h4" fill="none" stroke="#3b3a39" stroke-width="1" /><path d="M6.500 7h5.500M4.500 10h7.500M4.500 12.500h5" fill="none" stroke="#2b78c2" stroke-width="1.1" /><circle cx="4" cy="6.800" r="1.500" fill="#ffffff" stroke="#2b78c2" stroke-width="1"/></g><g transform="translate(1095.05 332.80)"><path d="M1.500 0.500h8.500l4 4v11h-12.500z" fill="#ffffff" stroke="#3b3a39" stroke-width="1" /><path d="M10 0.500v4h4" fill="none" stroke="#3b3a39" stroke-width="1" /><rect x="3.5" y="10" width="2" height="3.5" fill="#323130"/><rect x="6.5" y="8" width="2" height="5.5" fill="#323130"/><rect x="9.5" y="6" width="2" height="7.5" fill="#323130"/></g><g transform="translate(1123.00 332.80)"><rect x="1.5" y="1.5" width="14" height="13.5" fill="#cfe6f7" stroke="#2b78c2" stroke-width="1.1"/><path d="M15.500 2c-3 1-5 3-5 5.500s-3 1.500-4 3.500-1 3 0 4" fill="none" stroke="#2b78c2" stroke-width="1.6" /><path d="M2 .500c-1.500 0-2 1-2 2 0 1.500 2 3.500 2 3.500s2-2 2-3.500c0-1-.500-2-2-2z" fill="#e8912d" stroke="#c9701a" stroke-width="0.6" /><circle cx="13" cy="12" r="1.800" fill="#e8912d"/><circle cx="14.700" cy="9.300" r="1.200" fill="#e8912d"/><circle cx="10.500" cy="13.500" r="1.200" fill="#e8912d"/></g><g transform="translate(1150.95 332.80)"><path d="M8 0.800l7.200 7.200-7.200 7.200-7.200-7.200z" fill="#f6ebf9" stroke="#a55cc0" stroke-width="1.2" stroke-linejoin="round"/><path d="M4.800 4.300l3.200 3.700-3 3.500M11.200 4.300l-6.400 7.200M8 8l3.500 3.600" fill="none" stroke="#a55cc0" stroke-width="1.1" stroke-linejoin="round"/></g><g transform="translate(1011.20 356.80)"><path d="M0.500 1.500h9l6 6.500-6 6.500h-9l6-6.500z" fill="#d6e9f8" stroke="#2b78c2" stroke-width="1.1" stroke-linejoin="round"/><path d="M5 14.500l7-7.500" fill="none" stroke="#2b78c2" stroke-width="1" /></g><circle cx="1041.5" cy="364.500" r="0.900" fill="#3b3a39"/><circle cx="1047.1" cy="364.500" r="0.900" fill="#3b3a39"/><circle cx="1052.7" cy="364.500" r="0.900" fill="#3b3a39"/><path d="M1004.500 376.500H1185" stroke="#e1dfdd" stroke-width="1"/><g fill="none" stroke="#252423" stroke-width="1.100" stroke-dasharray="1.800 1.100"><rect x="1027.500" y="389.500" width="19" height="15"/><path d="M1027.500 397.500h19"/></g><path d="M1027.500 386.200h11.500" stroke="#252423" stroke-width="1.100"/><path d="M1068.500 387h13.500v4.800h-13.500zM1082 389.400h3.500v5.200h-9.500v3" fill="none" stroke="#3b3a39" stroke-width="1.200"/><rect x="1074.200" y="397.600" width="3.600" height="7.400" rx="0.800" fill="none" stroke="#3b3a39" stroke-width="1.200"/><circle cx="1115.500" cy="394.500" r="8" fill="none" stroke="#3b3a39" stroke-width="1.200"/><path d="M1121.300 400.300l5.700 5.700" stroke="#3b3a39" stroke-width="1.300"/><path d="M1108 396l3.500-3 2.500 2 4.500-4.500" fill="none" stroke="#3b3a39" stroke-width="1"/><path d="M1110.500 398v3.500M1113 397.500v5M1115.500 397.500v5M1118 396.500v5.500M1120.500 395.500v4" stroke="#3b3a39" stroke-width="0.900"/><rect x="1057" y="410" width="40" height="3.700" rx="1.800" fill="#f2c811"/><rect x="1009.600" y="417.900" width="164.500" height="28.200" rx="2" fill="#ffffff" stroke="#d2d0ce" stroke-width="1"/><circle cx="1031.800" cy="429" r="4.300" fill="none" stroke="#3b3a39" stroke-width="1.100"/><path d="M1028.800 432.200l-7 6.600" stroke="#3b3a39" stroke-width="1.100"/><path d="M1005.500 454.5H1178" stroke="#e1dfdd" stroke-width="1"/><path d="M1005.500 491H1178" stroke="#e1dfdd" stroke-width="1"/><path d="M1005.500 527.4H1178" stroke="#e1dfdd" stroke-width="1"/><path d="M1005.500 563.3H1178" stroke="#e1dfdd" stroke-width="1"/><path d="M1005.500 599.6H1178" stroke="#e1dfdd" stroke-width="1"/><path d="M1005.500 635.5H1178" stroke="#e1dfdd" stroke-width="1"/><path d="M1005.500 671.4H1178" stroke="#e1dfdd" stroke-width="1"/><path d="M1012.4 470.9l5.6 5.6 5.6-5.6" fill="none" stroke="#605e5c" stroke-width="1.2"/><path d="M1136 474.2H1155" stroke="#3b3a39" stroke-width="1.500"/><circle cx="1131" cy="474.2" r="4.900" fill="#f3f2f1" stroke="#3b3a39" stroke-width="1.600"/><path d="M1012.4 506.7l5.6 5.6 5.6-5.6" fill="none" stroke="#605e5c" stroke-width="1.2"/><path d="M1012.4 542.7l5.6 5.6 5.6-5.6" fill="none" stroke="#605e5c" stroke-width="1.2"/><path d="M1012.4 578.6l5.6 5.6 5.6-5.6" fill="none" stroke="#605e5c" stroke-width="1.2"/><path d="M1125.500 581.9H1144" stroke="#3b3a39" stroke-width="1.500"/><circle cx="1148.800" cy="581.9" r="5.600" fill="#605e5c"/><path d="M1012.4 614.5l5.6 5.6 5.6-5.6" fill="none" stroke="#605e5c" stroke-width="1.2"/><path d="M1125.500 617.8H1144" stroke="#3b3a39" stroke-width="1.500"/><circle cx="1148.800" cy="617.8" r="5.600" fill="#605e5c"/><path d="M1012.4 650.7l5.6 5.6 5.6-5.6" fill="none" stroke="#605e5c" stroke-width="1.2"/><path d="M1136 654H1155" stroke="#3b3a39" stroke-width="1.500"/><circle cx="1131" cy="654" r="4.900" fill="#f3f2f1" stroke="#3b3a39" stroke-width="1.600"/><path d="M1012.4 686.7l5.6 5.6 5.6-5.6" fill="none" stroke="#605e5c" stroke-width="1.2"/><path d="M1136 690H1155" stroke="#3b3a39" stroke-width="1.500"/><circle cx="1131" cy="690" r="4.900" fill="#f3f2f1" stroke="#3b3a39" stroke-width="1.600"/><rect x="1173.500" y="596" width="4" height="80.500" rx="2" fill="#c8c6c4"/></svg>
<span class="t" style="top:425.90px;font-size:13px;color:#3b3a39;left:1045.60px;transform-origin:0 0;transform:scaleX(0.8996);">Buscar</span>
<span class="t" style="top:468.04px;font-size:12px;color:#3b3a39;left:1031.00px;transform-origin:0 0;transform:scaleX(0.9808);">Etiqueta...</span>
<span class="t" style="top:468.04px;font-size:12px;color:#3b3a39;left:1103.00px;transform-origin:0 0;transform:scaleX(0.8303);">D...</span>
<span class="t" style="top:503.84px;font-size:12px;color:#3b3a39;left:1031.00px;transform-origin:0 0;transform:scaleX(0.9466);">Formas</span>
<span class="t" style="top:539.84px;font-size:12px;color:#3b3a39;left:1031.00px;transform-origin:0 0;transform:scaleX(0.9837);">Área de trazado</span>
<span class="t" style="top:575.74px;font-size:12px;color:#3b3a39;left:1031.00px;transform-origin:0 0;transform:scaleX(0.9829);">Título</span>
<span class="t" style="top:575.74px;font-size:12px;color:#3b3a39;left:1103.00px;transform-origin:0 0;transform:scaleX(0.8608);">A...</span>
<span class="t" style="top:611.64px;font-size:12px;color:#3b3a39;left:1031.00px;transform-origin:0 0;transform:scaleX(0.9845);">Fondo</span>
<span class="t" style="top:611.64px;font-size:12px;color:#3b3a39;left:1103.00px;transform-origin:0 0;transform:scaleX(0.8608);">A...</span>
<span class="t" style="top:647.84px;font-size:12px;color:#3b3a39;left:1031.00px;transform-origin:0 0;transform:scaleX(0.9847);">Bloquear...</span>
<span class="t" style="top:647.84px;font-size:12px;color:#3b3a39;left:1103.00px;transform-origin:0 0;transform:scaleX(0.8303);">D...</span>
<span class="t" style="top:683.84px;font-size:12px;color:#3b3a39;left:1031.00px;transform-origin:0 0;">Borde</span>
<span class="t" style="top:683.84px;font-size:12px;color:#3b3a39;left:1103.00px;transform-origin:0 0;transform:scaleX(0.8303);">D...</span>
<span class="t" style="top:177.83px;font-size:16.5px;color:#3b3a39;-webkit-text-stroke:0.36px #3b3a39;left:1198.20px;transform-origin:0 0;transform:scaleX(0.9472);">Campos</span>
<svg class="b" style="left:1187px;top:159px;" width="168" height="544" viewBox="1187 159 168 544"><path d="M1347.25 178.0l5.5 5.5-5.5 5.5" fill="none" stroke="#605e5c" stroke-width="1.2"/><rect x="1190.500" y="209.700" width="175" height="25.600" rx="2" fill="#ffffff" stroke="#605e5c" stroke-width="1"/><circle cx="1207.300" cy="220.300" r="4" fill="none" stroke="#3b3a39" stroke-width="1.100"/><path d="M1204.500 223.300l-5.500 5.300" stroke="#3b3a39" stroke-width="1.100"/><path d="M1187 242.500H1355" stroke="#e1dfdd" stroke-width="1"/><rect x="1224.6" y="253.2" width="10.400" height="10.400" rx="1.800" fill="#f8f7f6" stroke="#7f7d7b" stroke-width="1"/><path d="M1211.7 277.7l4.6 4.6-4.6 4.6" fill="none" stroke="#605e5c" stroke-width="1"/><rect x="1224.6" y="277.1" width="10.400" height="10.400" rx="1.800" fill="#f8f7f6" stroke="#7f7d7b" stroke-width="1"/><rect x="1242.1" y="276.3" width="15" height="13" fill="#fbfbfb" stroke="#3b3a39" stroke-width="1"/><path d="M1242.1 279.5h15M1245.6 274.8v2.500M1253.6 274.8v2.500" stroke="#3b3a39" stroke-width="1.100"/><rect x="1244.2" y="281.1" width="1.300" height="1.300" fill="#605e5c"/><rect x="1247.2" y="281.1" width="1.300" height="1.300" fill="#605e5c"/><rect x="1250.2" y="281.1" width="1.300" height="1.300" fill="#605e5c"/><rect x="1253.2" y="281.1" width="1.300" height="1.300" fill="#605e5c"/><rect x="1244.2" y="283.7" width="1.300" height="1.300" fill="#605e5c"/><rect x="1247.2" y="283.7" width="1.300" height="1.300" fill="#605e5c"/><rect x="1250.2" y="283.7" width="1.300" height="1.300" fill="#605e5c"/><rect x="1253.2" y="283.7" width="1.300" height="1.300" fill="#605e5c"/><rect x="1244.2" y="286.3" width="1.300" height="1.300" fill="#605e5c"/><rect x="1247.2" y="286.3" width="1.300" height="1.300" fill="#605e5c"/><rect x="1250.2" y="286.3" width="1.300" height="1.300" fill="#605e5c"/><rect x="1253.2" y="286.3" width="1.300" height="1.300" fill="#605e5c"/><rect x="1224.6" y="301.1" width="10.400" height="10.400" rx="1.800" fill="#f8f7f6" stroke="#7f7d7b" stroke-width="1"/><path d="M1254.3999999999999 301.5v-1.700h-9.600l5.300 6.500-5.300 6.500h9.600v-1.700" fill="none" stroke="#3b3a39" stroke-width="1" stroke-linejoin="round"/><path d="M1193.4 327.5l4.6 4.6 4.6-4.6" fill="none" stroke="#605e5c" stroke-width="1"/><rect x="1208.5" y="324.5" width="12" height="11" fill="#fbfbfb" stroke="#3b3a39" stroke-width="1"/><rect x="1208.5" y="324.5" width="12" height="2.700" fill="#3b3a39"/><path d="M1212.5 324.5v11M1216.5 324.5v11M1208.5 330h12M1208.5 332.8h12" stroke="#3b3a39" stroke-width="0.900"/><rect x="1224.6" y="349.3" width="10.400" height="10.400" rx="1.800" fill="#f8f7f6" stroke="#7f7d7b" stroke-width="1"/><circle cx="1249.6" cy="354.5" r="7.200" fill="none" stroke="#3b3a39" stroke-width="1"/><ellipse cx="1249.6" cy="354.5" rx="3.300" ry="7.200" fill="none" stroke="#3b3a39" stroke-width="1"/><path d="M1242.3999999999999 354.5h14.400M1243.3999999999999 350.9h12.400M1243.3999999999999 358.1h12.400" stroke="#3b3a39" stroke-width="0.900"/><rect x="1224.6" y="373.0" width="10.400" height="10.400" rx="1.800" fill="#f8f7f6" stroke="#7f7d7b" stroke-width="1"/><rect x="1224.6" y="397.1" width="10.400" height="10.400" rx="1.800" fill="#f8f7f6" stroke="#7f7d7b" stroke-width="1"/><circle cx="1249.6" cy="402.3" r="7.200" fill="none" stroke="#3b3a39" stroke-width="1"/><ellipse cx="1249.6" cy="402.3" rx="3.300" ry="7.200" fill="none" stroke="#3b3a39" stroke-width="1"/><path d="M1242.3999999999999 402.3h14.400M1243.3999999999999 398.7h12.400M1243.3999999999999 405.90000000000003h12.400" stroke="#3b3a39" stroke-width="0.900"/><rect x="1224.6" y="421.3" width="10.400" height="10.400" rx="1.800" fill="#f8f7f6" stroke="#7f7d7b" stroke-width="1"/><path d="M1194.4 447.5l4.6 4.6 4.6-4.6" fill="none" stroke="#605e5c" stroke-width="1"/><rect x="1208.5" y="444.3" width="12" height="11" fill="#fbfbfb" stroke="#3b3a39" stroke-width="1"/><rect x="1208.5" y="444.3" width="12" height="2.700" fill="#3b3a39"/><path d="M1212.5 444.3v11M1216.5 444.3v11M1208.5 449.8h12M1208.5 452.6h12" stroke="#3b3a39" stroke-width="0.900"/><circle cx="1221" cy="456.2" r="4.500" fill="#f2c811"/><path d="M1218.8 456.3l1.500 1.600 2.900-3.200" fill="none" stroke="#4a2f10" stroke-width="1.100"/><path d="M1209.2 471.7l4.6 4.6 4.6-4.6" fill="none" stroke="#605e5c" stroke-width="1"/><rect x="1224.2" y="468.7" width="11.400" height="11.400" rx="1.800" fill="#f2c811"/><path d="M1226.7 474.59999999999997l2.200 2.300 4.200-4.600" fill="none" stroke="#4a3f10" stroke-width="1.100"/><rect x="1242.1" y="468.4" width="15" height="13" fill="#fbfbfb" stroke="#3b3a39" stroke-width="1"/><path d="M1242.1 471.59999999999997h15M1245.6 466.9v2.500M1253.6 466.9v2.500" stroke="#3b3a39" stroke-width="1.100"/><rect x="1244.2" y="473.2" width="1.300" height="1.300" fill="#605e5c"/><rect x="1247.2" y="473.2" width="1.300" height="1.300" fill="#605e5c"/><rect x="1250.2" y="473.2" width="1.300" height="1.300" fill="#605e5c"/><rect x="1253.2" y="473.2" width="1.300" height="1.300" fill="#605e5c"/><rect x="1244.2" y="475.8" width="1.300" height="1.300" fill="#605e5c"/><rect x="1247.2" y="475.8" width="1.300" height="1.300" fill="#605e5c"/><rect x="1250.2" y="475.8" width="1.300" height="1.300" fill="#605e5c"/><rect x="1253.2" y="475.8" width="1.300" height="1.300" fill="#605e5c"/><rect x="1244.2" y="478.4" width="1.300" height="1.300" fill="#605e5c"/><rect x="1247.2" y="478.4" width="1.300" height="1.300" fill="#605e5c"/><rect x="1250.2" y="478.4" width="1.300" height="1.300" fill="#605e5c"/><rect x="1253.2" y="478.4" width="1.300" height="1.300" fill="#605e5c"/><circle cx="1256" cy="480.2" r="4.500" fill="#f2c811"/><path d="M1253.8 480.3l1.500 1.600 2.900-3.200" fill="none" stroke="#4a2f10" stroke-width="1.100"/><path d="M1224.0 495.7l4.6 4.6 4.6-4.6" fill="none" stroke="#605e5c" stroke-width="1"/><rect x="1239.3" y="492.8" width="11.400" height="11.400" rx="1.800" fill="#f2c811"/><path d="M1241.8 498.7l2.200 2.300 4.200-4.600" fill="none" stroke="#4a3f10" stroke-width="1.100"/><rect x="1260.5" y="491" width="3.500" height="3.500" fill="#fbfbfb" stroke="#3b3a39" stroke-width="0.900"/><rect x="1264.0" y="496.5" width="3.500" height="3.500" fill="#fbfbfb" stroke="#3b3a39" stroke-width="0.900"/><rect x="1266.0" y="501.5" width="3.500" height="3.500" fill="#fbfbfb" stroke="#3b3a39" stroke-width="0.900"/><path d="M1262.2 494.5v8.800h3.800M1262.2 498.2h1.800" fill="none" stroke="#3b3a39" stroke-width="0.900"/><circle cx="1271" cy="504.5" r="4.500" fill="#f2c811"/><path d="M1268.8 504.6l1.500 1.600 2.900-3.200" fill="none" stroke="#4a2f10" stroke-width="1.100"/><rect x="1254.8" y="517.0999999999999" width="10.400" height="10.400" rx="1.800" fill="#f8f7f6" stroke="#7f7d7b" stroke-width="1"/><rect x="1254.3" y="540.5" width="11.400" height="11.400" rx="1.800" fill="#f2c811"/><path d="M1256.8 546.4000000000001l2.200 2.300 4.200-4.600" fill="none" stroke="#4a3f10" stroke-width="1.100"/><rect x="1254.8" y="564.9" width="10.400" height="10.400" rx="1.800" fill="#f8f7f6" stroke="#7f7d7b" stroke-width="1"/><rect x="1254.8" y="588.8" width="10.400" height="10.400" rx="1.800" fill="#f8f7f6" stroke="#7f7d7b" stroke-width="1"/><rect x="1224.6" y="612.6999999999999" width="10.400" height="10.400" rx="1.800" fill="#f8f7f6" stroke="#7f7d7b" stroke-width="1"/><rect x="1224.6" y="636.5999999999999" width="10.400" height="10.400" rx="1.800" fill="#f8f7f6" stroke="#7f7d7b" stroke-width="1"/><path d="M1254.3999999999999 637.0v-1.700h-9.600l5.300 6.500-5.300 6.500h9.600v-1.700" fill="none" stroke="#3b3a39" stroke-width="1" stroke-linejoin="round"/><rect x="1224.1" y="660.0" width="11.400" height="11.400" rx="1.800" fill="#f2c811"/><path d="M1226.6 665.9000000000001l2.200 2.300 4.200-4.600" fill="none" stroke="#4a3f10" stroke-width="1.100"/><path d="M1254.3999999999999 660.9000000000001v-1.700h-9.600l5.300 6.500-5.300 6.500h9.600v-1.700" fill="none" stroke="#3b3a39" stroke-width="1" stroke-linejoin="round"/><rect x="1224.6" y="684.4" width="10.400" height="10.400" rx="1.800" fill="#f8f7f6" stroke="#7f7d7b" stroke-width="1"/><rect x="1244.0" y="682.4000000000001" width="10.400" height="14.600" rx="1" fill="#fbfbfb" stroke="#3b3a39" stroke-width="1"/><rect x="1246.0" y="684.4000000000001" width="6.400" height="2.600" fill="none" stroke="#3b3a39" stroke-width="0.800"/><rect x="1245.9" y="688.9" width="1.200" height="1.200" fill="#3b3a39"/><rect x="1248.6" y="688.9" width="1.200" height="1.200" fill="#3b3a39"/><rect x="1251.3" y="688.9" width="1.200" height="1.200" fill="#3b3a39"/><rect x="1245.9" y="691.4" width="1.200" height="1.200" fill="#3b3a39"/><rect x="1248.6" y="691.4" width="1.200" height="1.200" fill="#3b3a39"/><rect x="1251.3" y="691.4" width="1.200" height="1.200" fill="#3b3a39"/><rect x="1245.9" y="693.9" width="1.200" height="1.200" fill="#3b3a39"/><rect x="1248.6" y="693.9" width="1.200" height="1.200" fill="#3b3a39"/><rect x="1251.3" y="693.9" width="1.200" height="1.200" fill="#3b3a39"/><rect x="1352.500" y="350" width="2.500" height="353" fill="#d6d4d2"/></svg>
<span class="t" style="top:216.85px;font-size:14px;color:#3b3a39;left:1219.20px;transform-origin:0 0;transform:scaleX(0.9134);">Buscar</span>
<span class="t" style="top:253.04px;font-size:12px;color:#3b3a39;left:1262.30px;transform-origin:0 0;transform:scaleX(0.9651);">Ciudad</span>
<span class="t" style="top:276.94px;font-size:12px;color:#3b3a39;left:1262.30px;transform-origin:0 0;transform:scaleX(0.8965);">Fecha</span>
<span class="t" style="top:300.94px;font-size:12px;color:#3b3a39;left:1262.30px;transform-origin:0 0;transform:scaleX(0.9588);">Presupuesto</span>
<span class="t" style="top:325.24px;font-size:12px;color:#3b3a39;left:1227.30px;transform-origin:0 0;transform:scaleX(0.9382);">Tiendas2</span>
<span class="t" style="top:349.14px;font-size:12px;color:#3b3a39;left:1262.30px;transform-origin:0 0;transform:scaleX(0.9651);">Ciudad</span>
<span class="t" style="top:372.84px;font-size:12px;color:#3b3a39;left:1262.30px;transform-origin:0 0;transform:scaleX(0.9322);">ID_Tienda</span>
<span class="t" style="top:396.94px;font-size:12px;color:#3b3a39;left:1262.30px;transform-origin:0 0;transform:scaleX(0.8537);">País</span>
<span class="t" style="top:421.14px;font-size:12px;color:#3b3a39;left:1262.30px;transform-origin:0 0;transform:scaleX(0.9598);">Región</span>
<span class="t" style="top:445.24px;font-size:12px;color:#3b3a39;left:1227.20px;transform-origin:0 0;transform:scaleX(0.9407);">Ventas1</span>
<span class="t" style="top:469.04px;font-size:12px;color:#3b3a39;left:1262.40px;transform-origin:0 0;transform:scaleX(0.8965);">Fecha</span>
<span class="t" style="top:493.24px;font-size:12px;color:#3b3a39;left:1276.80px;transform-origin:0 0;transform:scaleX(0.9434);">Jerarquía de...</span>
<span class="t" style="top:516.94px;font-size:12px;color:#3b3a39;left:1292.00px;transform-origin:0 0;transform:scaleX(0.9835);">Año</span>
<span class="t" style="top:540.84px;font-size:12px;color:#3b3a39;left:1292.00px;transform-origin:0 0;transform:scaleX(0.9637);">Trimestre</span>
<span class="t" style="top:564.74px;font-size:12px;color:#3b3a39;left:1292.00px;transform-origin:0 0;transform:scaleX(0.9704);">Mes</span>
<span class="t" style="top:588.64px;font-size:12px;color:#3b3a39;left:1292.00px;transform-origin:0 0;transform:scaleX(0.8996);">Día</span>
<span class="t" style="top:612.54px;font-size:12px;color:#3b3a39;left:1262.40px;transform-origin:0 0;transform:scaleX(0.9322);">ID_Tienda</span>
<span class="t" style="top:636.44px;font-size:12px;color:#3b3a39;left:1262.40px;transform-origin:0 0;transform:scaleX(0.9236);">ID_Venta</span>
<span class="t" style="top:660.34px;font-size:12px;color:#3b3a39;left:1262.40px;transform-origin:0 0;transform:scaleX(0.9447);">Venta</span>
<span class="t" style="top:684.24px;font-size:12px;color:#3b3a39;left:1262.40px;transform-origin:0 0;transform:scaleX(0.9555);">Ventas i</span>
</div></body></html>
